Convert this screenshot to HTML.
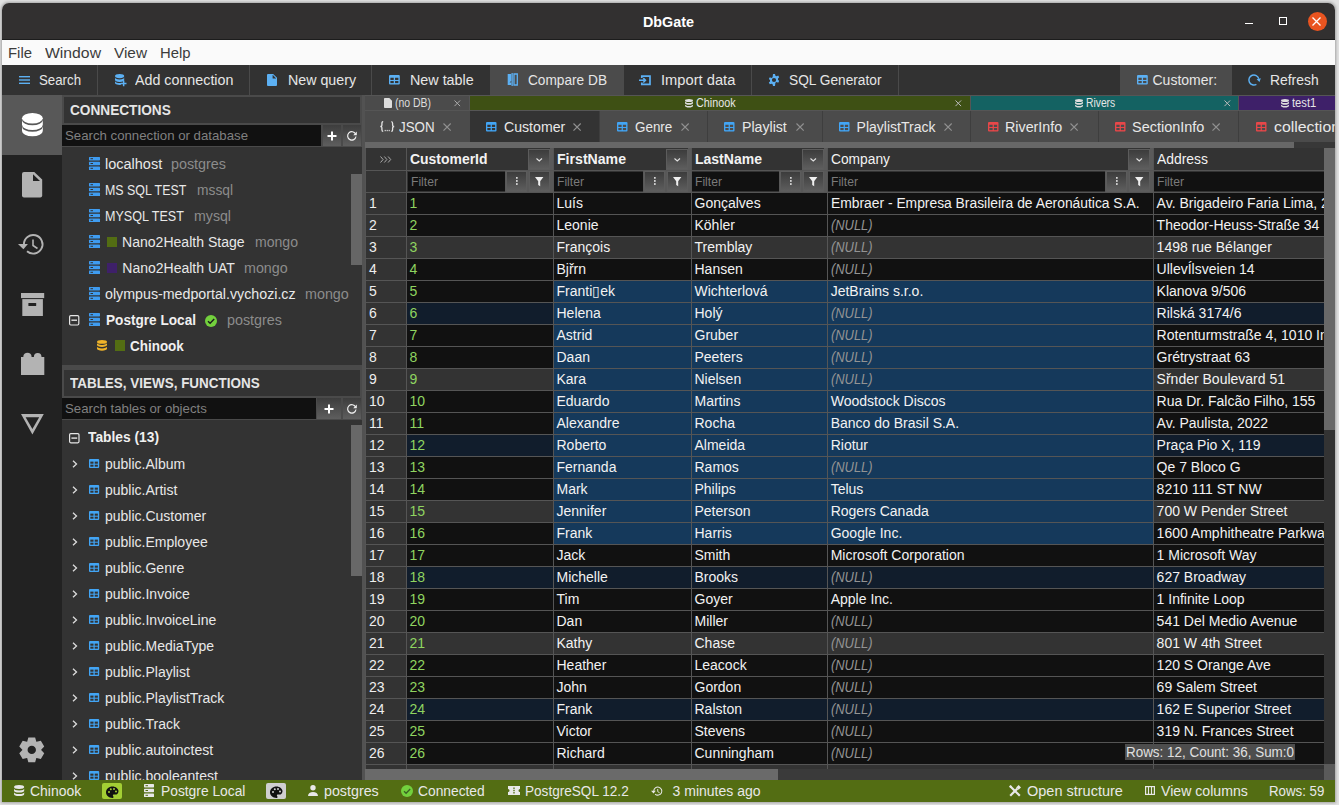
<!DOCTYPE html>
<html><head><meta charset="utf-8"><style>
html,body{margin:0;padding:0;width:1339px;height:805px;overflow:hidden;background:#e2e2e2;font-family:"Liberation Sans", sans-serif;}
div{position:absolute;box-sizing:border-box;}
.t{white-space:nowrap;line-height:normal;}
svg{overflow:visible}
</style></head><body>
<div style="left:2px;top:3px;width:1333px;height:799px;border-radius:7px 7px 0 0;box-shadow:0 0 3px 0.5px rgba(0,0,0,0.28);background:none"></div>
<div id="win" style="left:0;top:0;width:1339px;height:805px;clip-path:inset(3px 4px 3px 2px round 7px 7px 0 0);">
<div style="left:0px;top:0px;width:1339px;height:39px;background:#323030;"></div>
<div style="left:0px;top:39px;width:1339px;height:1px;background:#1c1c1c;"></div>
<div class="t" style="left:643px;top:14px;font-size:14px;color:#ffffff;font-weight:bold;transform:scaleX(1.0244);transform-origin:0 0;">DbGate</div>
<div style="left:1245px;top:22.6px;width:8px;height:1.3999999999999986px;background:#ffffff;"></div>
<div style="left:1279px;top:17px;width:8px;height:8px;background:transparent;border:1.5px solid #fff;"></div>
<div style="left:1307.5px;top:11.5px;width:19px;height:19px;border-radius:50%;background:#e95420"></div>
<svg style="position:absolute;left:1312px;top:16.5px;" width="9" height="9" viewBox="0 0 9 9"><path d="M0.5 0.5L8.5 8.5M8.5 0.5L0.5 8.5" stroke="#fff" stroke-width="1.3"/></svg>
<div style="left:0px;top:40px;width:1339px;height:25px;background:#fafafa;"></div>
<div class="t" style="left:8.2px;top:44.5px;font-size:14px;color:#3c3c3c;transform:scaleX(1.0639);transform-origin:0 0;">File</div>
<div class="t" style="left:44.5px;top:44.5px;font-size:14px;color:#3c3c3c;transform:scaleX(1.1247);transform-origin:0 0;">Window</div>
<div class="t" style="left:113.5px;top:44.5px;font-size:14px;color:#3c3c3c;transform:scaleX(1.0966);transform-origin:0 0;">View</div>
<div class="t" style="left:159.5px;top:44.5px;font-size:14px;color:#3c3c3c;transform:scaleX(1.0593);transform-origin:0 0;">Help</div>
<div style="left:0px;top:65px;width:1339px;height:30px;background:#323232;"></div>
<div style="left:490px;top:65px;width:134px;height:30px;background:#4b4b4b;"></div>
<div style="left:1120px;top:65px;width:112px;height:30px;background:#4b4b4b;"></div>
<div style="left:97px;top:65px;width:1px;height:30px;background:#4a4a4a;"></div>
<div style="left:249px;top:65px;width:1px;height:30px;background:#4a4a4a;"></div>
<div style="left:371px;top:65px;width:1px;height:30px;background:#4a4a4a;"></div>
<div style="left:751px;top:65px;width:1px;height:30px;background:#4a4a4a;"></div>
<div style="left:898px;top:65px;width:1px;height:30px;background:#4a4a4a;"></div>
<div class="t" style="left:39.4px;top:71.5px;font-size:14px;color:#e6e6e6;transform:scaleX(0.9468);transform-origin:0 0;">Search</div>
<div class="t" style="left:135.4px;top:71.5px;font-size:14px;color:#e6e6e6;transform:scaleX(1.0195);transform-origin:0 0;">Add connection</div>
<div class="t" style="left:288px;top:71.5px;font-size:14px;color:#e6e6e6;transform:scaleX(1.0162);transform-origin:0 0;">New query</div>
<div class="t" style="left:410.3px;top:71.5px;font-size:14px;color:#e6e6e6;transform:scaleX(1.0232);transform-origin:0 0;">New table</div>
<div class="t" style="left:528px;top:71.5px;font-size:14px;color:#e6e6e6;transform:scaleX(0.9763);transform-origin:0 0;">Compare DB</div>
<div class="t" style="left:661px;top:71.5px;font-size:14px;color:#e6e6e6;transform:scaleX(1.0492);transform-origin:0 0;">Import data</div>
<div class="t" style="left:789.4px;top:71.5px;font-size:14px;color:#e6e6e6;transform:scaleX(0.9796);transform-origin:0 0;">SQL Generator</div>
<div class="t" style="left:1152.5px;top:71.5px;font-size:14px;color:#e6e6e6;">Customer:</div>
<div class="t" style="left:1269.7px;top:71.5px;font-size:14px;color:#e6e6e6;transform:scaleX(0.9914);transform-origin:0 0;">Refresh</div>
<svg style="position:absolute;left:18.7px;top:75.6px;" width="11" height="8" viewBox="0 0 11 8"><rect x="0" y="0" width="11" height="1.4" fill="#5cb0f3"/><rect x="0" y="3.3" width="11" height="1.4" fill="#5cb0f3"/><rect x="0" y="6.6" width="11" height="1.4" fill="#5cb0f3"/></svg>
<svg style="position:absolute;left:114.8px;top:74.1px;" width="12" height="12" viewBox="0 0 12 12"><ellipse cx="4.6" cy="2.1" rx="4.6" ry="2.1" fill="#5cb0f3"/><path d="M0 3.3A4.6 2.1 0 0 0 9.2 3.3V5.8A4.6 2.1 0 0 1 0 5.8Z" fill="#5cb0f3"/><path d="M0 7A4.6 2.1 0 0 0 6 9V10.8A4.6 2.1 0 0 1 0 8.9Z" fill="#5cb0f3"/><path d="M7.9 6.6H9.4V8.7H11.5V10.2H9.4V12.3H7.9V10.2H5.8V8.7H7.9Z" fill="#5cb0f3"/></svg>
<svg style="position:absolute;left:267px;top:74.2px;" width="10" height="12" viewBox="0 0 10 12"><path d="M1 0h5.2L10 3.8V11a1 1 0 0 1-1 1H1a1 1 0 0 1-1-1V1a1 1 0 0 1 1-1z" fill="#5cb0f3"/><path d="M5.6 0.8V4.4H9.2Z" fill="#323232"/></svg>
<svg style="position:absolute;left:388.8px;top:75.3px;" width="10.8" height="9.5" viewBox="0 0 10.8 9.5"><svg viewBox="0 0 10 9" width="100%" height="100%" preserveAspectRatio="none"><rect x="0" y="0" width="10" height="9" rx="1" fill="#5cb0f3"/><rect x="1.3" y="2.6" width="3.1" height="2.1" fill="#323232"/><rect x="5.6" y="2.6" width="3.1" height="2.1" fill="#323232"/><rect x="1.3" y="5.7" width="3.1" height="2" fill="#323232"/><rect x="5.6" y="5.7" width="3.1" height="2" fill="#323232"/></svg></svg>
<svg style="position:absolute;left:507px;top:73px;" width="11" height="13" viewBox="0 0 11 13"><path d="M0.7 1H4.3V12H0.7Z" fill="#5cb0f3"/><path d="M4.5 0H5.8V13H4.5Z" fill="#5cb0f3"/><path d="M7 1H10.3V12H7Z" fill="none" stroke="#5cb0f3" stroke-width="1.3"/><path d="M2.5 9.5l1.8-1.8v1.8z" fill="#4b4b4b"/></svg>
<svg style="position:absolute;left:639px;top:74.6px;" width="12" height="10.6" viewBox="0 0 12 10.6"><path d="M2.8 3V1.2H11V9.4H2.8V7.6" fill="none" stroke="#5cb0f3" stroke-width="1.7"/><path d="M0 5.3H6.5M4.3 3.1L6.5 5.3L4.3 7.5" fill="none" stroke="#5cb0f3" stroke-width="1.5"/></svg>
<svg style="position:absolute;left:768px;top:73.8px;" width="12" height="12" viewBox="0 0 12 12"><path fill-rule="evenodd" fill="#5cb0f3" d="M5 0h2l.4 1.7 1.2.6 1.6-.7 1 1.7-1.2 1.2v1.3l1.2 1.2-1 1.7-1.6-.6-1.2.6L7 12H5l-.4-1.7-1.2-.6-1.6.6-1-1.7 1.2-1.2V6.1L.8 4.9l1-1.7 1.6.7 1.2-.6z M6 3.9A2.1 2.1 0 1 0 6 8.1A2.1 2.1 0 1 0 6 3.9z"/></svg>
<svg style="position:absolute;left:1136.6px;top:75.3px;" width="10.8" height="9.5" viewBox="0 0 10.8 9.5"><svg viewBox="0 0 10 9" width="100%" height="100%" preserveAspectRatio="none"><rect x="0" y="0" width="10" height="9" rx="1" fill="#5cb0f3"/><rect x="1.3" y="2.6" width="3.1" height="2.1" fill="#4b4b4b"/><rect x="5.6" y="2.6" width="3.1" height="2.1" fill="#4b4b4b"/><rect x="1.3" y="5.7" width="3.1" height="2" fill="#4b4b4b"/><rect x="5.6" y="5.7" width="3.1" height="2" fill="#4b4b4b"/></svg></svg>
<svg style="position:absolute;left:1248px;top:73.6px;" width="13" height="12" viewBox="0 0 13 12"><path d="M8.4 10.33A5 5 0 1 1 10.73 4.71" fill="none" stroke="#5cb0f3" stroke-width="1.45"/><path d="M12.85 4.14L8.61 5.28L11.5 7.9Z" fill="#5cb0f3"/></svg>
<div style="left:2px;top:95px;width:60px;height:685px;background:#222222;"></div>
<div style="left:2px;top:95px;width:60px;height:60px;background:#585858;"></div>
<svg style="position:absolute;left:21.8px;top:112.7px;" width="20.8" height="23.3" viewBox="0 0 20.8 23.3"><ellipse cx="10.4" cy="5.3" rx="10.4" ry="5.3" fill="#fff"/><path d="M0 6.9A10.4 5.3 0 0 0 20.8 6.9V11.8A10.4 5.3 0 0 1 0 11.8Z" fill="#fff"/><path d="M0 13.4A10.4 5.3 0 0 0 20.8 13.4V18A10.4 5.3 0 0 1 0 18Z" fill="#fff"/></svg>
<svg style="position:absolute;left:22px;top:171.6px;" width="20.2" height="25.4" viewBox="0 0 20.2 25.4"><path d="M2 0H12.3L20.2 7.6V23.4A2 2 0 0 1 18.2 25.4H2A2 2 0 0 1 0 23.4V2A2 2 0 0 1 2 0Z" fill="#b3b3b3"/><path d="M11 2.2V8.9H18Z" fill="#222"/></svg>
<svg style="position:absolute;left:14px;top:226px;" width="36" height="36" viewBox="0 0 36 36"><path d="M9.9 18.3A9.3 9.3 0 1 1 13 25.25" fill="none" stroke="#b3b3b3" stroke-width="1.9"/><path d="M4 18.1H13.9L9.4 23.3Z" fill="#b3b3b3"/><path d="M19 13.5V19.5L23.5 22.5" fill="none" stroke="#b3b3b3" stroke-width="1.6"/></svg>
<svg style="position:absolute;left:20.7px;top:292.9px;" width="23.2" height="23" viewBox="0 0 23.2 23"><rect x="0" y="0" width="23.2" height="5.1" fill="#b3b3b3"/><rect x="1.3" y="6.1" width="20.6" height="16.9" fill="#b3b3b3"/><rect x="7.4" y="10.1" width="7.8" height="2.9" rx="0.5" fill="#222"/></svg>
<svg style="position:absolute;left:20.6px;top:352.9px;" width="23.3" height="22.1" viewBox="0 0 23.3 22.1"><path d="M0 4.1H2.3V3.8A3.8 3.8 0 0 1 10.6 3.8V4.1H12.9V3.8A3.8 3.8 0 0 1 20.5 3.8V4.1H23.3V22.1H0Z" fill="#b3b3b3"/></svg>
<svg style="position:absolute;left:20.7px;top:414px;" width="22.8" height="20.4" viewBox="0 0 22.8 20.4"><path fill-rule="evenodd" d="M0 0H22.8L11.4 20.4Z M4.6 3.2H18.2L11.4 14.9Z" fill="#b3b3b3"/></svg>
<svg style="position:absolute;left:19.25px;top:736.5px;" width="25.5" height="25.8" viewBox="0 0 25.5 25.8"><path fill="#b3b3b3" d="M8.15 4.70 L9.35 0.46 L16.15 0.46 L17.35 4.70 L17.55 4.82 L21.83 3.73 L25.23 9.62 L22.15 12.78 L22.15 13.02 L25.23 16.18 L21.83 22.07 L17.55 20.98 L17.35 21.10 L16.15 25.34 L9.35 25.34 L8.15 21.10 L7.95 20.98 L3.67 22.07 L0.27 16.18 L3.35 13.02 L3.35 12.78 L0.27 9.62 L3.67 3.73 L7.95 4.82Z"/><circle cx="12.75" cy="12.9" r="4.2" fill="#222"/></svg>
<div style="left:62px;top:95px;width:303px;height:685px;background:#4a4a4a;"></div>
<div style="left:362px;top:95px;width:3px;height:685px;background:#525252;"></div>
<div style="left:64px;top:97px;width:296px;height:26px;background:#333333;"></div>
<div class="t" style="left:69.7px;top:102px;font-size:14px;color:#e6e6e6;font-weight:bold;transform:scaleX(0.9744);transform-origin:0 0;">CONNECTIONS</div>
<div style="left:62px;top:125px;width:259px;height:21px;background:#111111;"></div>
<div class="t" style="left:64.8px;top:127.69999999999999px;font-size:13px;color:#808080;transform:scaleX(1.0169);transform-origin:0 0;">Search connection or database</div>
<div style="left:323px;top:125px;width:18px;height:21px;background:#555;background:linear-gradient(#3d3d3d,#5e5e5e);"></div>
<div style="left:343px;top:125px;width:18px;height:21px;background:#555;background:linear-gradient(#3d3d3d,#5e5e5e);"></div>
<svg style="position:absolute;left:327px;top:130.5px;" width="10" height="10" viewBox="0 0 10 10"><path d="M5 0.5v9M0.5 5h9" stroke="#fff" stroke-width="2"/></svg>
<svg style="position:absolute;left:347px;top:130.5px;" width="10" height="10" viewBox="0 0 10 10"><path d="M8.6 3A4.2 4.2 0 1 0 9 5.5" fill="none" stroke="#eee" stroke-width="1.2"/><path d="M9.8 0.6v3.6H6.2z" fill="#eee"/></svg>
<div style="left:62px;top:147px;width:300px;height:218px;background:#333333;"></div>
<div style="left:351px;top:174px;width:11px;height:91px;background:#666666;"></div>
<svg style="position:absolute;left:89px;top:157px;" width="11" height="13" viewBox="0 0 11 13"><rect x="0" y="0" width="11" height="3.4" rx="0.6" fill="#3f9cf0"/><rect x="0" y="4.8" width="11" height="3.4" rx="0.6" fill="#3f9cf0"/><rect x="0" y="9.6" width="11" height="3.4" rx="0.6" fill="#3f9cf0"/><rect x="1.5" y="1.2" width="2.5" height="1" fill="#333"/><rect x="1.5" y="6" width="2.5" height="1" fill="#333"/><rect x="1.5" y="10.8" width="2.5" height="1" fill="#333"/></svg>
<div class="t" style="left:104.8px;top:156px;font-size:14px;color:#e8e8e8;transform:scaleX(1.0352);transform-origin:0 0;">localhost</div>
<div class="t" style="left:170.8px;top:156px;font-size:14px;color:#8c8c8c;transform:scaleX(1.0243);transform-origin:0 0;">postgres</div>
<svg style="position:absolute;left:89px;top:183px;" width="11" height="13" viewBox="0 0 11 13"><rect x="0" y="0" width="11" height="3.4" rx="0.6" fill="#3f9cf0"/><rect x="0" y="4.8" width="11" height="3.4" rx="0.6" fill="#3f9cf0"/><rect x="0" y="9.6" width="11" height="3.4" rx="0.6" fill="#3f9cf0"/><rect x="1.5" y="1.2" width="2.5" height="1" fill="#333"/><rect x="1.5" y="6" width="2.5" height="1" fill="#333"/><rect x="1.5" y="10.8" width="2.5" height="1" fill="#333"/></svg>
<div class="t" style="left:104.8px;top:182px;font-size:14px;color:#e8e8e8;transform:scaleX(0.8858);transform-origin:0 0;">MS SQL TEST</div>
<div class="t" style="left:196.5px;top:182px;font-size:14px;color:#8c8c8c;transform:scaleX(0.9847);transform-origin:0 0;">mssql</div>
<svg style="position:absolute;left:89px;top:209px;" width="11" height="13" viewBox="0 0 11 13"><rect x="0" y="0" width="11" height="3.4" rx="0.6" fill="#3f9cf0"/><rect x="0" y="4.8" width="11" height="3.4" rx="0.6" fill="#3f9cf0"/><rect x="0" y="9.6" width="11" height="3.4" rx="0.6" fill="#3f9cf0"/><rect x="1.5" y="1.2" width="2.5" height="1" fill="#333"/><rect x="1.5" y="6" width="2.5" height="1" fill="#333"/><rect x="1.5" y="10.8" width="2.5" height="1" fill="#333"/></svg>
<div class="t" style="left:104.8px;top:208px;font-size:14px;color:#e8e8e8;transform:scaleX(0.8965);transform-origin:0 0;">MYSQL TEST</div>
<div class="t" style="left:194px;top:208px;font-size:14px;color:#8c8c8c;transform:scaleX(1.0121);transform-origin:0 0;">mysql</div>
<svg style="position:absolute;left:89px;top:235px;" width="11" height="13" viewBox="0 0 11 13"><rect x="0" y="0" width="11" height="3.4" rx="0.6" fill="#3f9cf0"/><rect x="0" y="4.8" width="11" height="3.4" rx="0.6" fill="#3f9cf0"/><rect x="0" y="9.6" width="11" height="3.4" rx="0.6" fill="#3f9cf0"/><rect x="1.5" y="1.2" width="2.5" height="1" fill="#333"/><rect x="1.5" y="6" width="2.5" height="1" fill="#333"/><rect x="1.5" y="10.8" width="2.5" height="1" fill="#333"/></svg>
<div style="left:106.5px;top:236.5px;width:10.5px;height:10.300000000000011px;background:#536d13;"></div>
<div class="t" style="left:122.3px;top:234px;font-size:14px;color:#e8e8e8;transform:scaleX(1.0033);transform-origin:0 0;">Nano2Health Stage</div>
<div class="t" style="left:254.5px;top:234px;font-size:14px;color:#8c8c8c;transform:scaleX(1.0045);transform-origin:0 0;">mongo</div>
<svg style="position:absolute;left:89px;top:261px;" width="11" height="13" viewBox="0 0 11 13"><rect x="0" y="0" width="11" height="3.4" rx="0.6" fill="#3f9cf0"/><rect x="0" y="4.8" width="11" height="3.4" rx="0.6" fill="#3f9cf0"/><rect x="0" y="9.6" width="11" height="3.4" rx="0.6" fill="#3f9cf0"/><rect x="1.5" y="1.2" width="2.5" height="1" fill="#333"/><rect x="1.5" y="6" width="2.5" height="1" fill="#333"/><rect x="1.5" y="10.8" width="2.5" height="1" fill="#333"/></svg>
<div style="left:106.5px;top:262.5px;width:10.5px;height:10.300000000000011px;background:#3e2069;"></div>
<div class="t" style="left:122.3px;top:260px;font-size:14px;color:#e8e8e8;">Nano2Health UAT</div>
<div class="t" style="left:243.8px;top:260px;font-size:14px;color:#8c8c8c;transform:scaleX(1.0209);transform-origin:0 0;">mongo</div>
<svg style="position:absolute;left:89px;top:287px;" width="11" height="13" viewBox="0 0 11 13"><rect x="0" y="0" width="11" height="3.4" rx="0.6" fill="#3f9cf0"/><rect x="0" y="4.8" width="11" height="3.4" rx="0.6" fill="#3f9cf0"/><rect x="0" y="9.6" width="11" height="3.4" rx="0.6" fill="#3f9cf0"/><rect x="1.5" y="1.2" width="2.5" height="1" fill="#333"/><rect x="1.5" y="6" width="2.5" height="1" fill="#333"/><rect x="1.5" y="10.8" width="2.5" height="1" fill="#333"/></svg>
<div class="t" style="left:104.8px;top:286px;font-size:14px;color:#e8e8e8;transform:scaleX(1.0165);transform-origin:0 0;">olympus-medportal.vychozi.cz</div>
<div class="t" style="left:304.8px;top:286px;font-size:14px;color:#8c8c8c;transform:scaleX(1.0232);transform-origin:0 0;">mongo</div>
<svg style="position:absolute;left:68.8px;top:314.6px;" width="10.4" height="10.6" viewBox="0 0 10.4 10.6"><rect x="0.6" y="0.6" width="9.2" height="9.4" rx="1.2" fill="none" stroke="#e6e6e6" stroke-width="1.2"/><path d="M2.4 5.2h5.6" stroke="#f0f0f0" stroke-width="1.3"/></svg>
<svg style="position:absolute;left:89px;top:313px;" width="11" height="13" viewBox="0 0 11 13"><rect x="0" y="0" width="11" height="3.4" rx="0.6" fill="#3f9cf0"/><rect x="0" y="4.8" width="11" height="3.4" rx="0.6" fill="#3f9cf0"/><rect x="0" y="9.6" width="11" height="3.4" rx="0.6" fill="#3f9cf0"/><rect x="1.5" y="1.2" width="2.5" height="1" fill="#333"/><rect x="1.5" y="6" width="2.5" height="1" fill="#333"/><rect x="1.5" y="10.8" width="2.5" height="1" fill="#333"/></svg>
<div class="t" style="left:105.5px;top:312px;font-size:14px;color:#f0f0f0;font-weight:bold;transform:scaleX(0.9721);transform-origin:0 0;">Postgre Local</div>
<svg style="position:absolute;left:205.3px;top:314.8px;" width="12" height="12" viewBox="0 0 12 12"><circle cx="6" cy="6" r="6" fill="#73d13d"/><path d="M3 6.2l2.1 2.1L9.2 4" fill="none" stroke="#1c1c1c" stroke-width="1.4"/></svg>
<div class="t" style="left:227px;top:312px;font-size:14px;color:#8c8c8c;transform:scaleX(1.0243);transform-origin:0 0;">postgres</div>
<svg style="position:absolute;left:97px;top:340px;" width="10" height="11" viewBox="0 0 10 11"><ellipse cx="5" cy="1.9" rx="5" ry="1.9" fill="#f0b429"/><path d="M0 3.1v2c0 1 2.2 1.9 5 1.9s5-.9 5-1.9v-2c0 1-2.2 1.9-5 1.9S0 4.1 0 3.1z" fill="#f0b429"/><path d="M0 6.6v2.2c0 1 2.2 1.9 5 1.9s5-.9 5-1.9V6.6c0 1-2.2 1.9-5 1.9S0 7.6 0 6.6z" fill="#f0b429"/></svg>
<div style="left:114.5px;top:340px;width:10.5px;height:10.5px;background:#536d13;"></div>
<div class="t" style="left:130.2px;top:338px;font-size:14px;color:#f0f0f0;font-weight:bold;transform:scaleX(0.9608);transform-origin:0 0;">Chinook</div>
<div style="left:64px;top:370px;width:296px;height:26px;background:#333333;"></div>
<div class="t" style="left:69.6px;top:375px;font-size:14px;color:#e6e6e6;font-weight:bold;transform:scaleX(0.9610);transform-origin:0 0;">TABLES, VIEWS, FUNCTIONS</div>
<div style="left:62px;top:398px;width:254px;height:21px;background:#111111;"></div>
<div class="t" style="left:64.8px;top:400.5px;font-size:13px;color:#808080;transform:scaleX(1.0167);transform-origin:0 0;">Search tables or objects</div>
<div style="left:317px;top:398px;width:24px;height:21px;background:#555;background:linear-gradient(#3d3d3d,#5e5e5e);"></div>
<div style="left:343px;top:398px;width:18px;height:21px;background:#555;background:linear-gradient(#3d3d3d,#5e5e5e);"></div>
<svg style="position:absolute;left:324px;top:403.5px;" width="10" height="10" viewBox="0 0 10 10"><path d="M5 0.5v9M0.5 5h9" stroke="#fff" stroke-width="2"/></svg>
<svg style="position:absolute;left:347px;top:403.5px;" width="10" height="10" viewBox="0 0 10 10"><path d="M8.6 3A4.2 4.2 0 1 0 9 5.5" fill="none" stroke="#eee" stroke-width="1.2"/><path d="M9.8 0.6v3.6H6.2z" fill="#eee"/></svg>
<div style="left:62px;top:420px;width:300px;height:360px;background:#333333;"></div>
<div style="left:351px;top:425px;width:11px;height:151px;background:#686868;"></div>
<svg style="position:absolute;left:68.6px;top:432.6px;" width="10.6" height="10.4" viewBox="0 0 10.6 10.4"><rect x="0.6" y="0.6" width="9.4" height="9.2" rx="1.2" fill="none" stroke="#e6e6e6" stroke-width="1.2"/><path d="M2.4 5.1h5.8" stroke="#f0f0f0" stroke-width="1.3"/></svg>
<div class="t" style="left:88px;top:429px;font-size:14px;color:#f0f0f0;font-weight:bold;transform:scaleX(0.9848);transform-origin:0 0;">Tables (13)</div>
<svg style="position:absolute;left:71.5px;top:460.0px;" width="6" height="8" viewBox="0 0 6 8"><path d="M1 0.8l3.5 3.2L1 7.2" fill="none" stroke="#ddd" stroke-width="1.3"/></svg>
<svg style="position:absolute;left:88.8px;top:459.0px;" width="10.2" height="9" viewBox="0 0 10.2 9"><svg viewBox="0 0 10 9" width="100%" height="100%" preserveAspectRatio="none"><rect x="0" y="0" width="10" height="9" rx="1" fill="#42a5f5"/><rect x="1.3" y="2.6" width="3.1" height="2.1" fill="#333"/><rect x="5.6" y="2.6" width="3.1" height="2.1" fill="#333"/><rect x="1.3" y="5.7" width="3.1" height="2" fill="#333"/><rect x="5.6" y="5.7" width="3.1" height="2" fill="#333"/></svg></svg>
<div class="t" style="left:105px;top:455.5px;font-size:14px;color:#e8e8e8;">public.Album</div>
<svg style="position:absolute;left:71.5px;top:486.0px;" width="6" height="8" viewBox="0 0 6 8"><path d="M1 0.8l3.5 3.2L1 7.2" fill="none" stroke="#ddd" stroke-width="1.3"/></svg>
<svg style="position:absolute;left:88.8px;top:485.0px;" width="10.2" height="9" viewBox="0 0 10.2 9"><svg viewBox="0 0 10 9" width="100%" height="100%" preserveAspectRatio="none"><rect x="0" y="0" width="10" height="9" rx="1" fill="#42a5f5"/><rect x="1.3" y="2.6" width="3.1" height="2.1" fill="#333"/><rect x="5.6" y="2.6" width="3.1" height="2.1" fill="#333"/><rect x="1.3" y="5.7" width="3.1" height="2" fill="#333"/><rect x="5.6" y="5.7" width="3.1" height="2" fill="#333"/></svg></svg>
<div class="t" style="left:105px;top:481.5px;font-size:14px;color:#e8e8e8;">public.Artist</div>
<svg style="position:absolute;left:71.5px;top:512.0px;" width="6" height="8" viewBox="0 0 6 8"><path d="M1 0.8l3.5 3.2L1 7.2" fill="none" stroke="#ddd" stroke-width="1.3"/></svg>
<svg style="position:absolute;left:88.8px;top:511.0px;" width="10.2" height="9" viewBox="0 0 10.2 9"><svg viewBox="0 0 10 9" width="100%" height="100%" preserveAspectRatio="none"><rect x="0" y="0" width="10" height="9" rx="1" fill="#42a5f5"/><rect x="1.3" y="2.6" width="3.1" height="2.1" fill="#333"/><rect x="5.6" y="2.6" width="3.1" height="2.1" fill="#333"/><rect x="1.3" y="5.7" width="3.1" height="2" fill="#333"/><rect x="5.6" y="5.7" width="3.1" height="2" fill="#333"/></svg></svg>
<div class="t" style="left:105px;top:507.5px;font-size:14px;color:#e8e8e8;">public.Customer</div>
<svg style="position:absolute;left:71.5px;top:538.0px;" width="6" height="8" viewBox="0 0 6 8"><path d="M1 0.8l3.5 3.2L1 7.2" fill="none" stroke="#ddd" stroke-width="1.3"/></svg>
<svg style="position:absolute;left:88.8px;top:537.0px;" width="10.2" height="9" viewBox="0 0 10.2 9"><svg viewBox="0 0 10 9" width="100%" height="100%" preserveAspectRatio="none"><rect x="0" y="0" width="10" height="9" rx="1" fill="#42a5f5"/><rect x="1.3" y="2.6" width="3.1" height="2.1" fill="#333"/><rect x="5.6" y="2.6" width="3.1" height="2.1" fill="#333"/><rect x="1.3" y="5.7" width="3.1" height="2" fill="#333"/><rect x="5.6" y="5.7" width="3.1" height="2" fill="#333"/></svg></svg>
<div class="t" style="left:105px;top:533.5px;font-size:14px;color:#e8e8e8;">public.Employee</div>
<svg style="position:absolute;left:71.5px;top:564.0px;" width="6" height="8" viewBox="0 0 6 8"><path d="M1 0.8l3.5 3.2L1 7.2" fill="none" stroke="#ddd" stroke-width="1.3"/></svg>
<svg style="position:absolute;left:88.8px;top:563.0px;" width="10.2" height="9" viewBox="0 0 10.2 9"><svg viewBox="0 0 10 9" width="100%" height="100%" preserveAspectRatio="none"><rect x="0" y="0" width="10" height="9" rx="1" fill="#42a5f5"/><rect x="1.3" y="2.6" width="3.1" height="2.1" fill="#333"/><rect x="5.6" y="2.6" width="3.1" height="2.1" fill="#333"/><rect x="1.3" y="5.7" width="3.1" height="2" fill="#333"/><rect x="5.6" y="5.7" width="3.1" height="2" fill="#333"/></svg></svg>
<div class="t" style="left:105px;top:559.5px;font-size:14px;color:#e8e8e8;">public.Genre</div>
<svg style="position:absolute;left:71.5px;top:590.0px;" width="6" height="8" viewBox="0 0 6 8"><path d="M1 0.8l3.5 3.2L1 7.2" fill="none" stroke="#ddd" stroke-width="1.3"/></svg>
<svg style="position:absolute;left:88.8px;top:589.0px;" width="10.2" height="9" viewBox="0 0 10.2 9"><svg viewBox="0 0 10 9" width="100%" height="100%" preserveAspectRatio="none"><rect x="0" y="0" width="10" height="9" rx="1" fill="#42a5f5"/><rect x="1.3" y="2.6" width="3.1" height="2.1" fill="#333"/><rect x="5.6" y="2.6" width="3.1" height="2.1" fill="#333"/><rect x="1.3" y="5.7" width="3.1" height="2" fill="#333"/><rect x="5.6" y="5.7" width="3.1" height="2" fill="#333"/></svg></svg>
<div class="t" style="left:105px;top:585.5px;font-size:14px;color:#e8e8e8;">public.Invoice</div>
<svg style="position:absolute;left:71.5px;top:616.0px;" width="6" height="8" viewBox="0 0 6 8"><path d="M1 0.8l3.5 3.2L1 7.2" fill="none" stroke="#ddd" stroke-width="1.3"/></svg>
<svg style="position:absolute;left:88.8px;top:615.0px;" width="10.2" height="9" viewBox="0 0 10.2 9"><svg viewBox="0 0 10 9" width="100%" height="100%" preserveAspectRatio="none"><rect x="0" y="0" width="10" height="9" rx="1" fill="#42a5f5"/><rect x="1.3" y="2.6" width="3.1" height="2.1" fill="#333"/><rect x="5.6" y="2.6" width="3.1" height="2.1" fill="#333"/><rect x="1.3" y="5.7" width="3.1" height="2" fill="#333"/><rect x="5.6" y="5.7" width="3.1" height="2" fill="#333"/></svg></svg>
<div class="t" style="left:105px;top:611.5px;font-size:14px;color:#e8e8e8;">public.InvoiceLine</div>
<svg style="position:absolute;left:71.5px;top:642.0px;" width="6" height="8" viewBox="0 0 6 8"><path d="M1 0.8l3.5 3.2L1 7.2" fill="none" stroke="#ddd" stroke-width="1.3"/></svg>
<svg style="position:absolute;left:88.8px;top:641.0px;" width="10.2" height="9" viewBox="0 0 10.2 9"><svg viewBox="0 0 10 9" width="100%" height="100%" preserveAspectRatio="none"><rect x="0" y="0" width="10" height="9" rx="1" fill="#42a5f5"/><rect x="1.3" y="2.6" width="3.1" height="2.1" fill="#333"/><rect x="5.6" y="2.6" width="3.1" height="2.1" fill="#333"/><rect x="1.3" y="5.7" width="3.1" height="2" fill="#333"/><rect x="5.6" y="5.7" width="3.1" height="2" fill="#333"/></svg></svg>
<div class="t" style="left:105px;top:637.5px;font-size:14px;color:#e8e8e8;">public.MediaType</div>
<svg style="position:absolute;left:71.5px;top:668.0px;" width="6" height="8" viewBox="0 0 6 8"><path d="M1 0.8l3.5 3.2L1 7.2" fill="none" stroke="#ddd" stroke-width="1.3"/></svg>
<svg style="position:absolute;left:88.8px;top:667.0px;" width="10.2" height="9" viewBox="0 0 10.2 9"><svg viewBox="0 0 10 9" width="100%" height="100%" preserveAspectRatio="none"><rect x="0" y="0" width="10" height="9" rx="1" fill="#42a5f5"/><rect x="1.3" y="2.6" width="3.1" height="2.1" fill="#333"/><rect x="5.6" y="2.6" width="3.1" height="2.1" fill="#333"/><rect x="1.3" y="5.7" width="3.1" height="2" fill="#333"/><rect x="5.6" y="5.7" width="3.1" height="2" fill="#333"/></svg></svg>
<div class="t" style="left:105px;top:663.5px;font-size:14px;color:#e8e8e8;">public.Playlist</div>
<svg style="position:absolute;left:71.5px;top:694.0px;" width="6" height="8" viewBox="0 0 6 8"><path d="M1 0.8l3.5 3.2L1 7.2" fill="none" stroke="#ddd" stroke-width="1.3"/></svg>
<svg style="position:absolute;left:88.8px;top:693.0px;" width="10.2" height="9" viewBox="0 0 10.2 9"><svg viewBox="0 0 10 9" width="100%" height="100%" preserveAspectRatio="none"><rect x="0" y="0" width="10" height="9" rx="1" fill="#42a5f5"/><rect x="1.3" y="2.6" width="3.1" height="2.1" fill="#333"/><rect x="5.6" y="2.6" width="3.1" height="2.1" fill="#333"/><rect x="1.3" y="5.7" width="3.1" height="2" fill="#333"/><rect x="5.6" y="5.7" width="3.1" height="2" fill="#333"/></svg></svg>
<div class="t" style="left:105px;top:689.5px;font-size:14px;color:#e8e8e8;">public.PlaylistTrack</div>
<svg style="position:absolute;left:71.5px;top:720.0px;" width="6" height="8" viewBox="0 0 6 8"><path d="M1 0.8l3.5 3.2L1 7.2" fill="none" stroke="#ddd" stroke-width="1.3"/></svg>
<svg style="position:absolute;left:88.8px;top:719.0px;" width="10.2" height="9" viewBox="0 0 10.2 9"><svg viewBox="0 0 10 9" width="100%" height="100%" preserveAspectRatio="none"><rect x="0" y="0" width="10" height="9" rx="1" fill="#42a5f5"/><rect x="1.3" y="2.6" width="3.1" height="2.1" fill="#333"/><rect x="5.6" y="2.6" width="3.1" height="2.1" fill="#333"/><rect x="1.3" y="5.7" width="3.1" height="2" fill="#333"/><rect x="5.6" y="5.7" width="3.1" height="2" fill="#333"/></svg></svg>
<div class="t" style="left:105px;top:715.5px;font-size:14px;color:#e8e8e8;">public.Track</div>
<svg style="position:absolute;left:71.5px;top:746.0px;" width="6" height="8" viewBox="0 0 6 8"><path d="M1 0.8l3.5 3.2L1 7.2" fill="none" stroke="#ddd" stroke-width="1.3"/></svg>
<svg style="position:absolute;left:88.8px;top:745.0px;" width="10.2" height="9" viewBox="0 0 10.2 9"><svg viewBox="0 0 10 9" width="100%" height="100%" preserveAspectRatio="none"><rect x="0" y="0" width="10" height="9" rx="1" fill="#42a5f5"/><rect x="1.3" y="2.6" width="3.1" height="2.1" fill="#333"/><rect x="5.6" y="2.6" width="3.1" height="2.1" fill="#333"/><rect x="1.3" y="5.7" width="3.1" height="2" fill="#333"/><rect x="5.6" y="5.7" width="3.1" height="2" fill="#333"/></svg></svg>
<div class="t" style="left:105px;top:741.5px;font-size:14px;color:#e8e8e8;">public.autoinctest</div>
<svg style="position:absolute;left:71.5px;top:772.0px;" width="6" height="8" viewBox="0 0 6 8"><path d="M1 0.8l3.5 3.2L1 7.2" fill="none" stroke="#ddd" stroke-width="1.3"/></svg>
<svg style="position:absolute;left:88.8px;top:771.0px;" width="10.2" height="9" viewBox="0 0 10.2 9"><svg viewBox="0 0 10 9" width="100%" height="100%" preserveAspectRatio="none"><rect x="0" y="0" width="10" height="9" rx="1" fill="#42a5f5"/><rect x="1.3" y="2.6" width="3.1" height="2.1" fill="#333"/><rect x="5.6" y="2.6" width="3.1" height="2.1" fill="#333"/><rect x="1.3" y="5.7" width="3.1" height="2" fill="#333"/><rect x="5.6" y="5.7" width="3.1" height="2" fill="#333"/></svg></svg>
<div class="t" style="left:105px;top:767.5px;font-size:14px;color:#e8e8e8;">public.booleantest</div>
<div style="left:365px;top:95px;width:970px;height:47px;background:#4b4b4b;"></div>
<div style="left:365px;top:95px;width:970px;height:1px;background:#555555;"></div>
<div style="left:470px;top:96px;width:500px;height:14px;background:#3e5014;"></div>
<div style="left:971px;top:96px;width:267px;height:14px;background:#146262;"></div>
<div style="left:1239px;top:96px;width:96px;height:14px;background:#3e2069;"></div>
<div style="left:469px;top:96px;width:1px;height:14px;background:#555555;"></div>
<div style="left:970px;top:96px;width:1px;height:14px;background:#555555;"></div>
<div style="left:1238px;top:96px;width:1px;height:14px;background:#555555;"></div>
<div style="left:365px;top:110px;width:970px;height:1px;background:#555555;"></div>
<svg style="position:absolute;left:384px;top:98px;" width="8" height="10" viewBox="0 0 8 10"><path d="M0.8 0h4.5l2.7 2.8v6.4a.8.8 0 0 1-.8.8H.8a.8.8 0 0 1-.8-.8V.8A.8.8 0 0 1 .8 0z" fill="#ddd"/></svg>
<div class="t" style="left:395px;top:96px;font-size:12px;color:#dddddd;transform:scaleX(0.8707);transform-origin:0 0;">(no DB)</div>
<svg style="position:absolute;left:454px;top:99.8px;" width="6.6" height="6.6" viewBox="0 0 6.6 6.6"><path d="M0.5 0.5L6.1 6.1M6.1 0.5L0.5 6.1" stroke="#aaa" stroke-width="1"/></svg>
<svg style="position:absolute;left:684.5px;top:98.5px;" width="8" height="9" viewBox="0 0 8 9"><ellipse cx="4" cy="1.5" rx="4" ry="1.5" fill="#ddd"/><path d="M0 2.5v1.7c0 .8 1.8 1.5 4 1.5s4-.7 4-1.5V2.5c0 .8-1.8 1.5-4 1.5S0 3.3 0 2.5z" fill="#ddd"/><path d="M0 5.4v1.7c0 .8 1.8 1.5 4 1.5s4-.7 4-1.5V5.4c0 .8-1.8 1.5-4 1.5S0 6.2 0 5.4z" fill="#ddd"/></svg>
<div class="t" style="left:696px;top:96px;font-size:12px;color:#e6e6e6;transform:scaleX(0.8994);transform-origin:0 0;">Chinook</div>
<svg style="position:absolute;left:955.3px;top:99.8px;" width="6.6" height="6.6" viewBox="0 0 6.6 6.6"><path d="M0.5 0.5L6.1 6.1M6.1 0.5L0.5 6.1" stroke="#bbb" stroke-width="1"/></svg>
<svg style="position:absolute;left:1074.5px;top:98.5px;" width="8" height="9" viewBox="0 0 8 9"><ellipse cx="4" cy="1.5" rx="4" ry="1.5" fill="#ddd"/><path d="M0 2.5v1.7c0 .8 1.8 1.5 4 1.5s4-.7 4-1.5V2.5c0 .8-1.8 1.5-4 1.5S0 3.3 0 2.5z" fill="#ddd"/><path d="M0 5.4v1.7c0 .8 1.8 1.5 4 1.5s4-.7 4-1.5V5.4c0 .8-1.8 1.5-4 1.5S0 6.2 0 5.4z" fill="#ddd"/></svg>
<div class="t" style="left:1086px;top:96px;font-size:12px;color:#e6e6e6;transform:scaleX(0.8588);transform-origin:0 0;">Rivers</div>
<svg style="position:absolute;left:1223.8px;top:99.8px;" width="6.6" height="6.6" viewBox="0 0 6.6 6.6"><path d="M0.5 0.5L6.1 6.1M6.1 0.5L0.5 6.1" stroke="#bbb" stroke-width="1"/></svg>
<svg style="position:absolute;left:1280.5px;top:98.5px;" width="8" height="9" viewBox="0 0 8 9"><ellipse cx="4" cy="1.5" rx="4" ry="1.5" fill="#ddd"/><path d="M0 2.5v1.7c0 .8 1.8 1.5 4 1.5s4-.7 4-1.5V2.5c0 .8-1.8 1.5-4 1.5S0 3.3 0 2.5z" fill="#ddd"/><path d="M0 5.4v1.7c0 .8 1.8 1.5 4 1.5s4-.7 4-1.5V5.4c0 .8-1.8 1.5-4 1.5S0 6.2 0 5.4z" fill="#ddd"/></svg>
<div class="t" style="left:1291.7px;top:96px;font-size:12px;color:#e6e6e6;transform:scaleX(0.9341);transform-origin:0 0;">test1</div>
<div style="left:470px;top:111px;width:129px;height:31px;background:#333333;"></div>
<div style="left:599px;top:111px;width:1px;height:31px;background:#3e3e3e;"></div>
<div style="left:707px;top:111px;width:1px;height:31px;background:#3e3e3e;"></div>
<div style="left:821.5px;top:111px;width:1.0px;height:31px;background:#3e3e3e;"></div>
<div style="left:970px;top:111px;width:1px;height:31px;background:#3e3e3e;"></div>
<div style="left:1097.5px;top:111px;width:1.0px;height:31px;background:#3e3e3e;"></div>
<div style="left:1238px;top:111px;width:1px;height:31px;background:#3e3e3e;"></div>
<svg style="position:absolute;left:379.5px;top:121.3px;" width="14.5" height="11" viewBox="0 0 14.5 11"><path d="M3.2 0.6C1.9 0.6 1.9 1.5 1.9 2.5V4.3C1.9 5 1.3 5.5 0.3 5.5C1.3 5.5 1.9 6 1.9 6.7V8.5C1.9 9.5 1.9 10.4 3.2 10.4M11.3 0.6C12.6 0.6 12.6 1.5 12.6 2.5V4.3C12.6 5 13.2 5.5 14.2 5.5C13.2 5.5 12.6 6 12.6 6.7V8.5C12.6 9.5 12.6 10.4 11.3 10.4" fill="none" stroke="#e6e6e6" stroke-width="1.3"/><rect x="4.6" y="8.9" width="1.3" height="1.3" fill="#ccc"/><rect x="6.6" y="8.9" width="1.3" height="1.3" fill="#ccc"/><rect x="8.6" y="8.9" width="1.3" height="1.3" fill="#ccc"/></svg>
<div class="t" style="left:398.8px;top:119px;font-size:14px;color:#e8e8e8;transform:scaleX(0.9535);transform-origin:0 0;">JSON</div>
<svg style="position:absolute;left:442.5px;top:122.8px;" width="8.2" height="8.2" viewBox="0 0 8.2 8.2"><path d="M0.5 0.5L7.699999999999999 7.699999999999999M7.699999999999999 0.5L0.5 7.699999999999999" stroke="#909090" stroke-width="1.15"/></svg>
<svg style="position:absolute;left:485.8px;top:122px;" width="10.5" height="9.5" viewBox="0 0 10.5 9.5"><svg viewBox="0 0 10 9" width="100%" height="100%" preserveAspectRatio="none"><rect x="0" y="0" width="10" height="9" rx="1" fill="#42a5f5"/><rect x="1.3" y="2.6" width="3.1" height="2.1" fill="#333"/><rect x="5.6" y="2.6" width="3.1" height="2.1" fill="#333"/><rect x="1.3" y="5.7" width="3.1" height="2" fill="#333"/><rect x="5.6" y="5.7" width="3.1" height="2" fill="#333"/></svg></svg>
<div class="t" style="left:503.7px;top:119px;font-size:14px;color:#e8e8e8;transform:scaleX(1.0085);transform-origin:0 0;">Customer</div>
<svg style="position:absolute;left:573.2px;top:122.8px;" width="8.2" height="8.2" viewBox="0 0 8.2 8.2"><path d="M0.5 0.5L7.699999999999999 7.699999999999999M7.699999999999999 0.5L0.5 7.699999999999999" stroke="#909090" stroke-width="1.15"/></svg>
<svg style="position:absolute;left:617px;top:122px;" width="10.5" height="9.5" viewBox="0 0 10.5 9.5"><svg viewBox="0 0 10 9" width="100%" height="100%" preserveAspectRatio="none"><rect x="0" y="0" width="10" height="9" rx="1" fill="#42a5f5"/><rect x="1.3" y="2.6" width="3.1" height="2.1" fill="#4b4b4b"/><rect x="5.6" y="2.6" width="3.1" height="2.1" fill="#4b4b4b"/><rect x="1.3" y="5.7" width="3.1" height="2" fill="#4b4b4b"/><rect x="5.6" y="5.7" width="3.1" height="2" fill="#4b4b4b"/></svg></svg>
<div class="t" style="left:634.8px;top:119px;font-size:14px;color:#e8e8e8;transform:scaleX(0.9586);transform-origin:0 0;">Genre</div>
<svg style="position:absolute;left:680.8px;top:122.8px;" width="8.2" height="8.2" viewBox="0 0 8.2 8.2"><path d="M0.5 0.5L7.699999999999999 7.699999999999999M7.699999999999999 0.5L0.5 7.699999999999999" stroke="#909090" stroke-width="1.15"/></svg>
<svg style="position:absolute;left:723.8px;top:122px;" width="10.5" height="9.5" viewBox="0 0 10.5 9.5"><svg viewBox="0 0 10 9" width="100%" height="100%" preserveAspectRatio="none"><rect x="0" y="0" width="10" height="9" rx="1" fill="#42a5f5"/><rect x="1.3" y="2.6" width="3.1" height="2.1" fill="#4b4b4b"/><rect x="5.6" y="2.6" width="3.1" height="2.1" fill="#4b4b4b"/><rect x="1.3" y="5.7" width="3.1" height="2" fill="#4b4b4b"/><rect x="5.6" y="5.7" width="3.1" height="2" fill="#4b4b4b"/></svg></svg>
<div class="t" style="left:742.4px;top:119px;font-size:14px;color:#e8e8e8;transform:scaleX(1.0103);transform-origin:0 0;">Playlist</div>
<svg style="position:absolute;left:795.5px;top:122.8px;" width="8.2" height="8.2" viewBox="0 0 8.2 8.2"><path d="M0.5 0.5L7.699999999999999 7.699999999999999M7.699999999999999 0.5L0.5 7.699999999999999" stroke="#909090" stroke-width="1.15"/></svg>
<svg style="position:absolute;left:838.7px;top:122px;" width="10.5" height="9.5" viewBox="0 0 10.5 9.5"><svg viewBox="0 0 10 9" width="100%" height="100%" preserveAspectRatio="none"><rect x="0" y="0" width="10" height="9" rx="1" fill="#42a5f5"/><rect x="1.3" y="2.6" width="3.1" height="2.1" fill="#4b4b4b"/><rect x="5.6" y="2.6" width="3.1" height="2.1" fill="#4b4b4b"/><rect x="1.3" y="5.7" width="3.1" height="2" fill="#4b4b4b"/><rect x="5.6" y="5.7" width="3.1" height="2" fill="#4b4b4b"/></svg></svg>
<div class="t" style="left:856.6px;top:119px;font-size:14px;color:#e8e8e8;">PlaylistTrack</div>
<svg style="position:absolute;left:943.6px;top:122.8px;" width="8.2" height="8.2" viewBox="0 0 8.2 8.2"><path d="M0.5 0.5L7.699999999999999 7.699999999999999M7.699999999999999 0.5L0.5 7.699999999999999" stroke="#909090" stroke-width="1.15"/></svg>
<svg style="position:absolute;left:988px;top:122px;" width="10.5" height="9.5" viewBox="0 0 10.5 9.5"><svg viewBox="0 0 10 9" width="100%" height="100%" preserveAspectRatio="none"><rect x="0" y="0" width="10" height="9" rx="1" fill="#e84749"/><rect x="1.3" y="2.6" width="3.1" height="2.1" fill="#4b4b4b"/><rect x="5.6" y="2.6" width="3.1" height="2.1" fill="#4b4b4b"/><rect x="1.3" y="5.7" width="3.1" height="2" fill="#4b4b4b"/><rect x="5.6" y="5.7" width="3.1" height="2" fill="#4b4b4b"/></svg></svg>
<div class="t" style="left:1005.3px;top:119px;font-size:14px;color:#e8e8e8;transform:scaleX(1.0211);transform-origin:0 0;">RiverInfo</div>
<svg style="position:absolute;left:1070.4px;top:122.8px;" width="8.2" height="8.2" viewBox="0 0 8.2 8.2"><path d="M0.5 0.5L7.699999999999999 7.699999999999999M7.699999999999999 0.5L0.5 7.699999999999999" stroke="#909090" stroke-width="1.15"/></svg>
<svg style="position:absolute;left:1114.6px;top:122px;" width="10.5" height="9.5" viewBox="0 0 10.5 9.5"><svg viewBox="0 0 10 9" width="100%" height="100%" preserveAspectRatio="none"><rect x="0" y="0" width="10" height="9" rx="1" fill="#e84749"/><rect x="1.3" y="2.6" width="3.1" height="2.1" fill="#4b4b4b"/><rect x="5.6" y="2.6" width="3.1" height="2.1" fill="#4b4b4b"/><rect x="1.3" y="5.7" width="3.1" height="2" fill="#4b4b4b"/><rect x="5.6" y="5.7" width="3.1" height="2" fill="#4b4b4b"/></svg></svg>
<div class="t" style="left:1131.9px;top:119px;font-size:14px;color:#e8e8e8;transform:scaleX(1.0322);transform-origin:0 0;">SectionInfo</div>
<svg style="position:absolute;left:1212px;top:122.8px;" width="8.2" height="8.2" viewBox="0 0 8.2 8.2"><path d="M0.5 0.5L7.699999999999999 7.699999999999999M7.699999999999999 0.5L0.5 7.699999999999999" stroke="#909090" stroke-width="1.15"/></svg>
<svg style="position:absolute;left:1256.3px;top:122px;" width="10.5" height="9.5" viewBox="0 0 10.5 9.5"><svg viewBox="0 0 10 9" width="100%" height="100%" preserveAspectRatio="none"><rect x="0" y="0" width="10" height="9" rx="1" fill="#e84749"/><rect x="1.3" y="2.6" width="3.1" height="2.1" fill="#4b4b4b"/><rect x="5.6" y="2.6" width="3.1" height="2.1" fill="#4b4b4b"/><rect x="1.3" y="5.7" width="3.1" height="2" fill="#4b4b4b"/><rect x="5.6" y="5.7" width="3.1" height="2" fill="#4b4b4b"/></svg></svg>
<div class="t" style="left:1273.5px;top:119px;font-size:14px;color:#e8e8e8;transform:scaleX(1.1308);transform-origin:0 0;">collection</div>
<div style="left:365px;top:142px;width:970px;height:6px;background:#383838;"></div>
<div style="left:365px;top:142px;width:929px;height:6px;background:#676767;"></div>
<div style="left:365px;top:148px;width:959px;height:621px;background:#555555;"></div>
<div style="left:366px;top:148px;width:40px;height:22px;background:#333333;"></div>
<div style="left:366px;top:171px;width:40px;height:21px;background:#333333;"></div>
<div style="left:407px;top:148px;width:146px;height:22px;background:#333333;"></div>
<div style="left:407px;top:171px;width:146px;height:21px;background:#333333;"></div>
<div style="left:554px;top:148px;width:137px;height:22px;background:#333333;"></div>
<div style="left:554px;top:171px;width:137px;height:21px;background:#333333;"></div>
<div style="left:692px;top:148px;width:135px;height:22px;background:#333333;"></div>
<div style="left:692px;top:171px;width:135px;height:21px;background:#333333;"></div>
<div style="left:828px;top:148px;width:325px;height:22px;background:#333333;"></div>
<div style="left:828px;top:171px;width:325px;height:21px;background:#333333;"></div>
<div style="left:1154px;top:148px;width:170px;height:22px;background:#333333;"></div>
<div style="left:1154px;top:171px;width:170px;height:21px;background:#333333;"></div>
<svg style="position:absolute;left:380px;top:155.5px;" width="12" height="7" viewBox="0 0 12 7"><path d="M0.5 0.5l2.6 3-2.6 3M4.3 0.5l2.6 3-2.6 3M8.1 0.5l2.6 3-2.6 3" fill="none" stroke="#aaa" stroke-width="1"/></svg>
<div class="t" style="left:410px;top:151.3px;font-size:14px;color:#f2f2f2;font-weight:bold;transform:scaleX(0.9963);transform-origin:0 0;">CustomerId</div>
<div style="left:550px;top:148px;width:3px;height:22px;background:#5a5a5a;"></div>
<div style="left:505px;top:171px;width:48px;height:21px;background:#585858;"></div>
<div style="left:528px;top:149px;width:22px;height:21px;background:none;background:linear-gradient(#3c3c3c,#5e5e5e);border:1px solid #5c5c5c;"></div>
<svg style="position:absolute;left:535.7px;top:158px;" width="6.5" height="3.5" viewBox="0 0 6.5 3.5"><path d="M0.5 0.5L3.25 3L6 0.5" fill="none" stroke="#e0e0e0" stroke-width="1.1"/></svg>
<div style="left:408px;top:172px;width:97px;height:19px;background:#111111;"></div>
<div style="left:506px;top:171px;width:21px;height:20.5px;background:none;background:linear-gradient(#3c3c3c,#5e5e5e);border:1px solid #5c5c5c;"></div>
<div style="left:529px;top:171px;width:21px;height:20.5px;background:none;background:linear-gradient(#3c3c3c,#5e5e5e);border:1px solid #5c5c5c;"></div>
<svg style="position:absolute;left:516.2px;top:177.4px;" width="1.7" height="8" viewBox="0 0 1.7 8"><rect x="0" y="0" width="1.7" height="1.7" fill="#e0e0e0"/><rect x="0" y="3.1" width="1.7" height="1.7" fill="#e0e0e0"/><rect x="0" y="6.2" width="1.7" height="1.7" fill="#e0e0e0"/></svg>
<svg style="position:absolute;left:534.8px;top:177px;" width="8.4" height="9.2" viewBox="0 0 8.4 9.2"><path d="M0 0H8.4L5.2 4.3V9.2L3.2 8V4.3Z" fill="#eee"/></svg>
<div class="t" style="left:410.5px;top:174px;font-size:13px;color:#7a7a7a;transform:scaleX(0.9346);transform-origin:0 0;">Filter</div>
<div class="t" style="left:557px;top:151.3px;font-size:14px;color:#f2f2f2;font-weight:bold;transform:scaleX(1.0078);transform-origin:0 0;">FirstName</div>
<div style="left:688px;top:148px;width:3px;height:22px;background:#5a5a5a;"></div>
<div style="left:643px;top:171px;width:48px;height:21px;background:#585858;"></div>
<div style="left:666px;top:149px;width:22px;height:21px;background:none;background:linear-gradient(#3c3c3c,#5e5e5e);border:1px solid #5c5c5c;"></div>
<svg style="position:absolute;left:673.7px;top:158px;" width="6.5" height="3.5" viewBox="0 0 6.5 3.5"><path d="M0.5 0.5L3.25 3L6 0.5" fill="none" stroke="#e0e0e0" stroke-width="1.1"/></svg>
<div style="left:554px;top:172px;width:89px;height:19px;background:#111111;"></div>
<div style="left:644px;top:171px;width:21px;height:20.5px;background:none;background:linear-gradient(#3c3c3c,#5e5e5e);border:1px solid #5c5c5c;"></div>
<div style="left:667px;top:171px;width:21px;height:20.5px;background:none;background:linear-gradient(#3c3c3c,#5e5e5e);border:1px solid #5c5c5c;"></div>
<svg style="position:absolute;left:654.2px;top:177.4px;" width="1.7" height="8" viewBox="0 0 1.7 8"><rect x="0" y="0" width="1.7" height="1.7" fill="#e0e0e0"/><rect x="0" y="3.1" width="1.7" height="1.7" fill="#e0e0e0"/><rect x="0" y="6.2" width="1.7" height="1.7" fill="#e0e0e0"/></svg>
<svg style="position:absolute;left:672.8px;top:177px;" width="8.4" height="9.2" viewBox="0 0 8.4 9.2"><path d="M0 0H8.4L5.2 4.3V9.2L3.2 8V4.3Z" fill="#eee"/></svg>
<div class="t" style="left:556.5px;top:174px;font-size:13px;color:#7a7a7a;transform:scaleX(0.9346);transform-origin:0 0;">Filter</div>
<div class="t" style="left:695px;top:151.3px;font-size:14px;color:#f2f2f2;font-weight:bold;">LastName</div>
<div style="left:824px;top:148px;width:3px;height:22px;background:#5a5a5a;"></div>
<div style="left:779px;top:171px;width:48px;height:21px;background:#585858;"></div>
<div style="left:802px;top:149px;width:22px;height:21px;background:none;background:linear-gradient(#3c3c3c,#5e5e5e);border:1px solid #5c5c5c;"></div>
<svg style="position:absolute;left:809.7px;top:158px;" width="6.5" height="3.5" viewBox="0 0 6.5 3.5"><path d="M0.5 0.5L3.25 3L6 0.5" fill="none" stroke="#e0e0e0" stroke-width="1.1"/></svg>
<div style="left:692px;top:172px;width:87px;height:19px;background:#111111;"></div>
<div style="left:780px;top:171px;width:21px;height:20.5px;background:none;background:linear-gradient(#3c3c3c,#5e5e5e);border:1px solid #5c5c5c;"></div>
<div style="left:803px;top:171px;width:21px;height:20.5px;background:none;background:linear-gradient(#3c3c3c,#5e5e5e);border:1px solid #5c5c5c;"></div>
<svg style="position:absolute;left:790.2px;top:177.4px;" width="1.7" height="8" viewBox="0 0 1.7 8"><rect x="0" y="0" width="1.7" height="1.7" fill="#e0e0e0"/><rect x="0" y="3.1" width="1.7" height="1.7" fill="#e0e0e0"/><rect x="0" y="6.2" width="1.7" height="1.7" fill="#e0e0e0"/></svg>
<svg style="position:absolute;left:808.8px;top:177px;" width="8.4" height="9.2" viewBox="0 0 8.4 9.2"><path d="M0 0H8.4L5.2 4.3V9.2L3.2 8V4.3Z" fill="#eee"/></svg>
<div class="t" style="left:694.5px;top:174px;font-size:13px;color:#7a7a7a;transform:scaleX(0.9346);transform-origin:0 0;">Filter</div>
<div class="t" style="left:831px;top:151.3px;font-size:14px;color:#f2f2f2;transform:scaleX(0.9847);transform-origin:0 0;">Company</div>
<div style="left:1150px;top:148px;width:3px;height:22px;background:#5a5a5a;"></div>
<div style="left:1105px;top:171px;width:48px;height:21px;background:#585858;"></div>
<div style="left:1128px;top:149px;width:22px;height:21px;background:none;background:linear-gradient(#3c3c3c,#5e5e5e);border:1px solid #5c5c5c;"></div>
<svg style="position:absolute;left:1135.7px;top:158px;" width="6.5" height="3.5" viewBox="0 0 6.5 3.5"><path d="M0.5 0.5L3.25 3L6 0.5" fill="none" stroke="#e0e0e0" stroke-width="1.1"/></svg>
<div style="left:828px;top:172px;width:277px;height:19px;background:#111111;"></div>
<div style="left:1106px;top:171px;width:21px;height:20.5px;background:none;background:linear-gradient(#3c3c3c,#5e5e5e);border:1px solid #5c5c5c;"></div>
<div style="left:1129px;top:171px;width:21px;height:20.5px;background:none;background:linear-gradient(#3c3c3c,#5e5e5e);border:1px solid #5c5c5c;"></div>
<svg style="position:absolute;left:1116.2px;top:177.4px;" width="1.7" height="8" viewBox="0 0 1.7 8"><rect x="0" y="0" width="1.7" height="1.7" fill="#e0e0e0"/><rect x="0" y="3.1" width="1.7" height="1.7" fill="#e0e0e0"/><rect x="0" y="6.2" width="1.7" height="1.7" fill="#e0e0e0"/></svg>
<svg style="position:absolute;left:1134.8px;top:177px;" width="8.4" height="9.2" viewBox="0 0 8.4 9.2"><path d="M0 0H8.4L5.2 4.3V9.2L3.2 8V4.3Z" fill="#eee"/></svg>
<div class="t" style="left:830.5px;top:174px;font-size:13px;color:#7a7a7a;transform:scaleX(0.9346);transform-origin:0 0;">Filter</div>
<div class="t" style="left:1157px;top:151.3px;font-size:14px;color:#f2f2f2;transform:scaleX(0.9930);transform-origin:0 0;">Address</div>
<div style="left:1154px;top:172px;width:170px;height:19px;background:#111111;"></div>
<div class="t" style="left:1156.5px;top:174px;font-size:13px;color:#7a7a7a;transform:scaleX(0.9346);transform-origin:0 0;">Filter</div>
<div style="left:366px;top:193px;width:40px;height:21px;background:#333333;"></div>
<div style="left:407px;top:193px;width:146px;height:21px;background:#111111;"></div>
<div style="left:554px;top:193px;width:137px;height:21px;background:#111111;"></div>
<div style="left:692px;top:193px;width:135px;height:21px;background:#111111;"></div>
<div style="left:828px;top:193px;width:325px;height:21px;background:#111111;"></div>
<div style="left:1154px;top:193px;width:170px;height:21px;background:#111111;"></div>
<div class="t" style="left:369px;top:195px;font-size:14px;color:#eeeeee;">1</div>
<div class="t" style="left:409.5px;top:195px;font-size:14px;color:#8fd460;">1</div>
<div class="t" style="left:556.5px;top:195px;font-size:14px;color:#f2f2f2;">Luís</div>
<div class="t" style="left:694.5px;top:195px;font-size:14px;color:#f2f2f2;">Gonçalves</div>
<div class="t" style="left:830.7px;top:195px;font-size:14px;color:#f2f2f2;transform:scaleX(0.9888);transform-origin:0 0;">Embraer - Empresa Brasileira de Aeronáutica S.A.</div>
<div class="t" style="left:1156.6px;top:195px;font-size:14px;color:#f2f2f2;">Av. Brigadeiro Faria Lima, 2170</div>
<div style="left:366px;top:215px;width:40px;height:21px;background:#333333;"></div>
<div style="left:407px;top:215px;width:146px;height:21px;background:#111111;"></div>
<div style="left:554px;top:215px;width:137px;height:21px;background:#111111;"></div>
<div style="left:692px;top:215px;width:135px;height:21px;background:#111111;"></div>
<div style="left:828px;top:215px;width:325px;height:21px;background:#111111;"></div>
<div style="left:1154px;top:215px;width:170px;height:21px;background:#111111;"></div>
<div class="t" style="left:369px;top:217px;font-size:14px;color:#eeeeee;">2</div>
<div class="t" style="left:409.5px;top:217px;font-size:14px;color:#8fd460;">2</div>
<div class="t" style="left:556.5px;top:217px;font-size:14px;color:#f2f2f2;">Leonie</div>
<div class="t" style="left:694.5px;top:217px;font-size:14px;color:#f2f2f2;">Köhler</div>
<div class="t" style="left:831px;top:217px;font-size:14px;color:#939393;font-style:italic;transform:scaleX(0.9220);transform-origin:0 0;">(NULL)</div>
<div class="t" style="left:1156.6px;top:217px;font-size:14px;color:#f2f2f2;">Theodor-Heuss-Straße 34</div>
<div style="left:366px;top:237px;width:40px;height:21px;background:#333333;"></div>
<div style="left:407px;top:237px;width:146px;height:21px;background:#333333;"></div>
<div style="left:554px;top:237px;width:137px;height:21px;background:#333333;"></div>
<div style="left:692px;top:237px;width:135px;height:21px;background:#333333;"></div>
<div style="left:828px;top:237px;width:325px;height:21px;background:#333333;"></div>
<div style="left:1154px;top:237px;width:170px;height:21px;background:#333333;"></div>
<div class="t" style="left:369px;top:239px;font-size:14px;color:#eeeeee;">3</div>
<div class="t" style="left:409.5px;top:239px;font-size:14px;color:#8fd460;">3</div>
<div class="t" style="left:556.5px;top:239px;font-size:14px;color:#f2f2f2;">François</div>
<div class="t" style="left:694.5px;top:239px;font-size:14px;color:#f2f2f2;">Tremblay</div>
<div class="t" style="left:831px;top:239px;font-size:14px;color:#939393;font-style:italic;transform:scaleX(0.9220);transform-origin:0 0;">(NULL)</div>
<div class="t" style="left:1156.6px;top:239px;font-size:14px;color:#f2f2f2;">1498 rue Bélanger</div>
<div style="left:366px;top:259px;width:40px;height:21px;background:#333333;"></div>
<div style="left:407px;top:259px;width:146px;height:21px;background:#111111;"></div>
<div style="left:554px;top:259px;width:137px;height:21px;background:#111111;"></div>
<div style="left:692px;top:259px;width:135px;height:21px;background:#111111;"></div>
<div style="left:828px;top:259px;width:325px;height:21px;background:#111111;"></div>
<div style="left:1154px;top:259px;width:170px;height:21px;background:#111111;"></div>
<div class="t" style="left:369px;top:261px;font-size:14px;color:#eeeeee;">4</div>
<div class="t" style="left:409.5px;top:261px;font-size:14px;color:#8fd460;">4</div>
<div class="t" style="left:556.5px;top:261px;font-size:14px;color:#f2f2f2;">Bjřrn</div>
<div class="t" style="left:694.5px;top:261px;font-size:14px;color:#f2f2f2;">Hansen</div>
<div class="t" style="left:831px;top:261px;font-size:14px;color:#939393;font-style:italic;transform:scaleX(0.9220);transform-origin:0 0;">(NULL)</div>
<div class="t" style="left:1156.6px;top:261px;font-size:14px;color:#f2f2f2;">UllevÍlsveien 14</div>
<div style="left:366px;top:281px;width:40px;height:21px;background:#333333;"></div>
<div style="left:407px;top:281px;width:146px;height:21px;background:#111111;"></div>
<div style="left:554px;top:281px;width:137px;height:21px;background:#15395b;"></div>
<div style="left:692px;top:281px;width:135px;height:21px;background:#15395b;"></div>
<div style="left:828px;top:281px;width:325px;height:21px;background:#15395b;"></div>
<div style="left:1154px;top:281px;width:170px;height:21px;background:#111111;"></div>
<div class="t" style="left:369px;top:283px;font-size:14px;color:#eeeeee;">5</div>
<div class="t" style="left:409.5px;top:283px;font-size:14px;color:#8fd460;">5</div>
<div class="t" style="left:556.5px;top:283px;font-size:14px;color:#f2f2f2;">Franti▯ek</div>
<div class="t" style="left:694.5px;top:283px;font-size:14px;color:#f2f2f2;">Wichterlová</div>
<div class="t" style="left:830.7px;top:283px;font-size:14px;color:#f2f2f2;">JetBrains s.r.o.</div>
<div class="t" style="left:1156.6px;top:283px;font-size:14px;color:#f2f2f2;">Klanova 9/506</div>
<div style="left:366px;top:303px;width:40px;height:21px;background:#333333;"></div>
<div style="left:407px;top:303px;width:146px;height:21px;background:#111d2c;"></div>
<div style="left:554px;top:303px;width:137px;height:21px;background:#15395b;"></div>
<div style="left:692px;top:303px;width:135px;height:21px;background:#15395b;"></div>
<div style="left:828px;top:303px;width:325px;height:21px;background:#15395b;"></div>
<div style="left:1154px;top:303px;width:170px;height:21px;background:#111d2c;"></div>
<div class="t" style="left:369px;top:305px;font-size:14px;color:#eeeeee;">6</div>
<div class="t" style="left:409.5px;top:305px;font-size:14px;color:#8fd460;">6</div>
<div class="t" style="left:556.5px;top:305px;font-size:14px;color:#f2f2f2;">Helena</div>
<div class="t" style="left:694.5px;top:305px;font-size:14px;color:#f2f2f2;">Holý</div>
<div class="t" style="left:831px;top:305px;font-size:14px;color:#939393;font-style:italic;transform:scaleX(0.9220);transform-origin:0 0;">(NULL)</div>
<div class="t" style="left:1156.6px;top:305px;font-size:14px;color:#f2f2f2;">Rilská 3174/6</div>
<div style="left:366px;top:325px;width:40px;height:21px;background:#333333;"></div>
<div style="left:407px;top:325px;width:146px;height:21px;background:#111111;"></div>
<div style="left:554px;top:325px;width:137px;height:21px;background:#15395b;"></div>
<div style="left:692px;top:325px;width:135px;height:21px;background:#15395b;"></div>
<div style="left:828px;top:325px;width:325px;height:21px;background:#15395b;"></div>
<div style="left:1154px;top:325px;width:170px;height:21px;background:#111111;"></div>
<div class="t" style="left:369px;top:327px;font-size:14px;color:#eeeeee;">7</div>
<div class="t" style="left:409.5px;top:327px;font-size:14px;color:#8fd460;">7</div>
<div class="t" style="left:556.5px;top:327px;font-size:14px;color:#f2f2f2;">Astrid</div>
<div class="t" style="left:694.5px;top:327px;font-size:14px;color:#f2f2f2;">Gruber</div>
<div class="t" style="left:831px;top:327px;font-size:14px;color:#939393;font-style:italic;transform:scaleX(0.9220);transform-origin:0 0;">(NULL)</div>
<div class="t" style="left:1156.6px;top:327px;font-size:14px;color:#f2f2f2;">Rotenturmstraße 4, 1010 Innere Stadt</div>
<div style="left:366px;top:347px;width:40px;height:21px;background:#333333;"></div>
<div style="left:407px;top:347px;width:146px;height:21px;background:#111111;"></div>
<div style="left:554px;top:347px;width:137px;height:21px;background:#15395b;"></div>
<div style="left:692px;top:347px;width:135px;height:21px;background:#15395b;"></div>
<div style="left:828px;top:347px;width:325px;height:21px;background:#15395b;"></div>
<div style="left:1154px;top:347px;width:170px;height:21px;background:#111111;"></div>
<div class="t" style="left:369px;top:349px;font-size:14px;color:#eeeeee;">8</div>
<div class="t" style="left:409.5px;top:349px;font-size:14px;color:#8fd460;">8</div>
<div class="t" style="left:556.5px;top:349px;font-size:14px;color:#f2f2f2;">Daan</div>
<div class="t" style="left:694.5px;top:349px;font-size:14px;color:#f2f2f2;">Peeters</div>
<div class="t" style="left:831px;top:349px;font-size:14px;color:#939393;font-style:italic;transform:scaleX(0.9220);transform-origin:0 0;">(NULL)</div>
<div class="t" style="left:1156.6px;top:349px;font-size:14px;color:#f2f2f2;">Grétrystraat 63</div>
<div style="left:366px;top:369px;width:40px;height:21px;background:#333333;"></div>
<div style="left:407px;top:369px;width:146px;height:21px;background:#333333;"></div>
<div style="left:554px;top:369px;width:137px;height:21px;background:#15395b;"></div>
<div style="left:692px;top:369px;width:135px;height:21px;background:#15395b;"></div>
<div style="left:828px;top:369px;width:325px;height:21px;background:#15395b;"></div>
<div style="left:1154px;top:369px;width:170px;height:21px;background:#333333;"></div>
<div class="t" style="left:369px;top:371px;font-size:14px;color:#eeeeee;">9</div>
<div class="t" style="left:409.5px;top:371px;font-size:14px;color:#8fd460;">9</div>
<div class="t" style="left:556.5px;top:371px;font-size:14px;color:#f2f2f2;">Kara</div>
<div class="t" style="left:694.5px;top:371px;font-size:14px;color:#f2f2f2;">Nielsen</div>
<div class="t" style="left:831px;top:371px;font-size:14px;color:#939393;font-style:italic;transform:scaleX(0.9220);transform-origin:0 0;">(NULL)</div>
<div class="t" style="left:1156.6px;top:371px;font-size:14px;color:#f2f2f2;">Sřnder Boulevard 51</div>
<div style="left:366px;top:391px;width:40px;height:21px;background:#333333;"></div>
<div style="left:407px;top:391px;width:146px;height:21px;background:#111111;"></div>
<div style="left:554px;top:391px;width:137px;height:21px;background:#15395b;"></div>
<div style="left:692px;top:391px;width:135px;height:21px;background:#15395b;"></div>
<div style="left:828px;top:391px;width:325px;height:21px;background:#15395b;"></div>
<div style="left:1154px;top:391px;width:170px;height:21px;background:#111111;"></div>
<div class="t" style="left:369px;top:393px;font-size:14px;color:#eeeeee;">10</div>
<div class="t" style="left:409.5px;top:393px;font-size:14px;color:#8fd460;">10</div>
<div class="t" style="left:556.5px;top:393px;font-size:14px;color:#f2f2f2;">Eduardo</div>
<div class="t" style="left:694.5px;top:393px;font-size:14px;color:#f2f2f2;">Martins</div>
<div class="t" style="left:830.7px;top:393px;font-size:14px;color:#f2f2f2;">Woodstock Discos</div>
<div class="t" style="left:1156.6px;top:393px;font-size:14px;color:#f2f2f2;">Rua Dr. Falcão Filho, 155</div>
<div style="left:366px;top:413px;width:40px;height:21px;background:#333333;"></div>
<div style="left:407px;top:413px;width:146px;height:21px;background:#111111;"></div>
<div style="left:554px;top:413px;width:137px;height:21px;background:#15395b;"></div>
<div style="left:692px;top:413px;width:135px;height:21px;background:#15395b;"></div>
<div style="left:828px;top:413px;width:325px;height:21px;background:#15395b;"></div>
<div style="left:1154px;top:413px;width:170px;height:21px;background:#111111;"></div>
<div class="t" style="left:369px;top:415px;font-size:14px;color:#eeeeee;">11</div>
<div class="t" style="left:409.5px;top:415px;font-size:14px;color:#8fd460;">11</div>
<div class="t" style="left:556.5px;top:415px;font-size:14px;color:#f2f2f2;">Alexandre</div>
<div class="t" style="left:694.5px;top:415px;font-size:14px;color:#f2f2f2;">Rocha</div>
<div class="t" style="left:830.7px;top:415px;font-size:14px;color:#f2f2f2;">Banco do Brasil S.A.</div>
<div class="t" style="left:1156.6px;top:415px;font-size:14px;color:#f2f2f2;">Av. Paulista, 2022</div>
<div style="left:366px;top:435px;width:40px;height:21px;background:#333333;"></div>
<div style="left:407px;top:435px;width:146px;height:21px;background:#111d2c;"></div>
<div style="left:554px;top:435px;width:137px;height:21px;background:#15395b;"></div>
<div style="left:692px;top:435px;width:135px;height:21px;background:#15395b;"></div>
<div style="left:828px;top:435px;width:325px;height:21px;background:#15395b;"></div>
<div style="left:1154px;top:435px;width:170px;height:21px;background:#111d2c;"></div>
<div class="t" style="left:369px;top:437px;font-size:14px;color:#eeeeee;">12</div>
<div class="t" style="left:409.5px;top:437px;font-size:14px;color:#8fd460;">12</div>
<div class="t" style="left:556.5px;top:437px;font-size:14px;color:#f2f2f2;">Roberto</div>
<div class="t" style="left:694.5px;top:437px;font-size:14px;color:#f2f2f2;">Almeida</div>
<div class="t" style="left:830.7px;top:437px;font-size:14px;color:#f2f2f2;">Riotur</div>
<div class="t" style="left:1156.6px;top:437px;font-size:14px;color:#f2f2f2;">Praça Pio X, 119</div>
<div style="left:366px;top:457px;width:40px;height:21px;background:#333333;"></div>
<div style="left:407px;top:457px;width:146px;height:21px;background:#111111;"></div>
<div style="left:554px;top:457px;width:137px;height:21px;background:#15395b;"></div>
<div style="left:692px;top:457px;width:135px;height:21px;background:#15395b;"></div>
<div style="left:828px;top:457px;width:325px;height:21px;background:#15395b;"></div>
<div style="left:1154px;top:457px;width:170px;height:21px;background:#111111;"></div>
<div class="t" style="left:369px;top:459px;font-size:14px;color:#eeeeee;">13</div>
<div class="t" style="left:409.5px;top:459px;font-size:14px;color:#8fd460;">13</div>
<div class="t" style="left:556.5px;top:459px;font-size:14px;color:#f2f2f2;">Fernanda</div>
<div class="t" style="left:694.5px;top:459px;font-size:14px;color:#f2f2f2;">Ramos</div>
<div class="t" style="left:831px;top:459px;font-size:14px;color:#939393;font-style:italic;transform:scaleX(0.9220);transform-origin:0 0;">(NULL)</div>
<div class="t" style="left:1156.6px;top:459px;font-size:14px;color:#f2f2f2;">Qe 7 Bloco G</div>
<div style="left:366px;top:479px;width:40px;height:21px;background:#333333;"></div>
<div style="left:407px;top:479px;width:146px;height:21px;background:#111111;"></div>
<div style="left:554px;top:479px;width:137px;height:21px;background:#15395b;"></div>
<div style="left:692px;top:479px;width:135px;height:21px;background:#15395b;"></div>
<div style="left:828px;top:479px;width:325px;height:21px;background:#15395b;"></div>
<div style="left:1154px;top:479px;width:170px;height:21px;background:#111111;"></div>
<div class="t" style="left:369px;top:481px;font-size:14px;color:#eeeeee;">14</div>
<div class="t" style="left:409.5px;top:481px;font-size:14px;color:#8fd460;">14</div>
<div class="t" style="left:556.5px;top:481px;font-size:14px;color:#f2f2f2;">Mark</div>
<div class="t" style="left:694.5px;top:481px;font-size:14px;color:#f2f2f2;">Philips</div>
<div class="t" style="left:830.7px;top:481px;font-size:14px;color:#f2f2f2;">Telus</div>
<div class="t" style="left:1156.6px;top:481px;font-size:14px;color:#f2f2f2;">8210 111 ST NW</div>
<div style="left:366px;top:501px;width:40px;height:21px;background:#333333;"></div>
<div style="left:407px;top:501px;width:146px;height:21px;background:#333333;"></div>
<div style="left:554px;top:501px;width:137px;height:21px;background:#15395b;"></div>
<div style="left:692px;top:501px;width:135px;height:21px;background:#15395b;"></div>
<div style="left:828px;top:501px;width:325px;height:21px;background:#15395b;"></div>
<div style="left:1154px;top:501px;width:170px;height:21px;background:#333333;"></div>
<div class="t" style="left:369px;top:503px;font-size:14px;color:#eeeeee;">15</div>
<div class="t" style="left:409.5px;top:503px;font-size:14px;color:#8fd460;">15</div>
<div class="t" style="left:556.5px;top:503px;font-size:14px;color:#f2f2f2;">Jennifer</div>
<div class="t" style="left:694.5px;top:503px;font-size:14px;color:#f2f2f2;">Peterson</div>
<div class="t" style="left:830.7px;top:503px;font-size:14px;color:#f2f2f2;">Rogers Canada</div>
<div class="t" style="left:1156.6px;top:503px;font-size:14px;color:#f2f2f2;">700 W Pender Street</div>
<div style="left:366px;top:523px;width:40px;height:21px;background:#333333;"></div>
<div style="left:407px;top:523px;width:146px;height:21px;background:#111111;"></div>
<div style="left:554px;top:523px;width:137px;height:21px;background:#15395b;"></div>
<div style="left:692px;top:523px;width:135px;height:21px;background:#15395b;"></div>
<div style="left:828px;top:523px;width:325px;height:21px;background:#15395b;"></div>
<div style="left:1154px;top:523px;width:170px;height:21px;background:#111111;"></div>
<div class="t" style="left:369px;top:525px;font-size:14px;color:#eeeeee;">16</div>
<div class="t" style="left:409.5px;top:525px;font-size:14px;color:#8fd460;">16</div>
<div class="t" style="left:556.5px;top:525px;font-size:14px;color:#f2f2f2;">Frank</div>
<div class="t" style="left:694.5px;top:525px;font-size:14px;color:#f2f2f2;">Harris</div>
<div class="t" style="left:830.7px;top:525px;font-size:14px;color:#f2f2f2;">Google Inc.</div>
<div class="t" style="left:1156.6px;top:525px;font-size:14px;color:#f2f2f2;">1600 Amphitheatre Parkway</div>
<div style="left:366px;top:545px;width:40px;height:21px;background:#333333;"></div>
<div style="left:407px;top:545px;width:146px;height:21px;background:#111111;"></div>
<div style="left:554px;top:545px;width:137px;height:21px;background:#111111;"></div>
<div style="left:692px;top:545px;width:135px;height:21px;background:#111111;"></div>
<div style="left:828px;top:545px;width:325px;height:21px;background:#111111;"></div>
<div style="left:1154px;top:545px;width:170px;height:21px;background:#111111;"></div>
<div class="t" style="left:369px;top:547px;font-size:14px;color:#eeeeee;">17</div>
<div class="t" style="left:409.5px;top:547px;font-size:14px;color:#8fd460;">17</div>
<div class="t" style="left:556.5px;top:547px;font-size:14px;color:#f2f2f2;">Jack</div>
<div class="t" style="left:694.5px;top:547px;font-size:14px;color:#f2f2f2;">Smith</div>
<div class="t" style="left:830.7px;top:547px;font-size:14px;color:#f2f2f2;">Microsoft Corporation</div>
<div class="t" style="left:1156.6px;top:547px;font-size:14px;color:#f2f2f2;">1 Microsoft Way</div>
<div style="left:366px;top:567px;width:40px;height:21px;background:#333333;"></div>
<div style="left:407px;top:567px;width:146px;height:21px;background:#111d2c;"></div>
<div style="left:554px;top:567px;width:137px;height:21px;background:#111d2c;"></div>
<div style="left:692px;top:567px;width:135px;height:21px;background:#111d2c;"></div>
<div style="left:828px;top:567px;width:325px;height:21px;background:#111d2c;"></div>
<div style="left:1154px;top:567px;width:170px;height:21px;background:#111d2c;"></div>
<div class="t" style="left:369px;top:569px;font-size:14px;color:#eeeeee;">18</div>
<div class="t" style="left:409.5px;top:569px;font-size:14px;color:#8fd460;">18</div>
<div class="t" style="left:556.5px;top:569px;font-size:14px;color:#f2f2f2;">Michelle</div>
<div class="t" style="left:694.5px;top:569px;font-size:14px;color:#f2f2f2;">Brooks</div>
<div class="t" style="left:831px;top:569px;font-size:14px;color:#939393;font-style:italic;transform:scaleX(0.9220);transform-origin:0 0;">(NULL)</div>
<div class="t" style="left:1156.6px;top:569px;font-size:14px;color:#f2f2f2;">627 Broadway</div>
<div style="left:366px;top:589px;width:40px;height:21px;background:#333333;"></div>
<div style="left:407px;top:589px;width:146px;height:21px;background:#111111;"></div>
<div style="left:554px;top:589px;width:137px;height:21px;background:#111111;"></div>
<div style="left:692px;top:589px;width:135px;height:21px;background:#111111;"></div>
<div style="left:828px;top:589px;width:325px;height:21px;background:#111111;"></div>
<div style="left:1154px;top:589px;width:170px;height:21px;background:#111111;"></div>
<div class="t" style="left:369px;top:591px;font-size:14px;color:#eeeeee;">19</div>
<div class="t" style="left:409.5px;top:591px;font-size:14px;color:#8fd460;">19</div>
<div class="t" style="left:556.5px;top:591px;font-size:14px;color:#f2f2f2;">Tim</div>
<div class="t" style="left:694.5px;top:591px;font-size:14px;color:#f2f2f2;">Goyer</div>
<div class="t" style="left:830.7px;top:591px;font-size:14px;color:#f2f2f2;">Apple Inc.</div>
<div class="t" style="left:1156.6px;top:591px;font-size:14px;color:#f2f2f2;">1 Infinite Loop</div>
<div style="left:366px;top:611px;width:40px;height:21px;background:#333333;"></div>
<div style="left:407px;top:611px;width:146px;height:21px;background:#111111;"></div>
<div style="left:554px;top:611px;width:137px;height:21px;background:#111111;"></div>
<div style="left:692px;top:611px;width:135px;height:21px;background:#111111;"></div>
<div style="left:828px;top:611px;width:325px;height:21px;background:#111111;"></div>
<div style="left:1154px;top:611px;width:170px;height:21px;background:#111111;"></div>
<div class="t" style="left:369px;top:613px;font-size:14px;color:#eeeeee;">20</div>
<div class="t" style="left:409.5px;top:613px;font-size:14px;color:#8fd460;">20</div>
<div class="t" style="left:556.5px;top:613px;font-size:14px;color:#f2f2f2;">Dan</div>
<div class="t" style="left:694.5px;top:613px;font-size:14px;color:#f2f2f2;">Miller</div>
<div class="t" style="left:831px;top:613px;font-size:14px;color:#939393;font-style:italic;transform:scaleX(0.9220);transform-origin:0 0;">(NULL)</div>
<div class="t" style="left:1156.6px;top:613px;font-size:14px;color:#f2f2f2;">541 Del Medio Avenue</div>
<div style="left:366px;top:633px;width:40px;height:21px;background:#333333;"></div>
<div style="left:407px;top:633px;width:146px;height:21px;background:#333333;"></div>
<div style="left:554px;top:633px;width:137px;height:21px;background:#333333;"></div>
<div style="left:692px;top:633px;width:135px;height:21px;background:#333333;"></div>
<div style="left:828px;top:633px;width:325px;height:21px;background:#333333;"></div>
<div style="left:1154px;top:633px;width:170px;height:21px;background:#333333;"></div>
<div class="t" style="left:369px;top:635px;font-size:14px;color:#eeeeee;">21</div>
<div class="t" style="left:409.5px;top:635px;font-size:14px;color:#8fd460;">21</div>
<div class="t" style="left:556.5px;top:635px;font-size:14px;color:#f2f2f2;">Kathy</div>
<div class="t" style="left:694.5px;top:635px;font-size:14px;color:#f2f2f2;">Chase</div>
<div class="t" style="left:831px;top:635px;font-size:14px;color:#939393;font-style:italic;transform:scaleX(0.9220);transform-origin:0 0;">(NULL)</div>
<div class="t" style="left:1156.6px;top:635px;font-size:14px;color:#f2f2f2;">801 W 4th Street</div>
<div style="left:366px;top:655px;width:40px;height:21px;background:#333333;"></div>
<div style="left:407px;top:655px;width:146px;height:21px;background:#111111;"></div>
<div style="left:554px;top:655px;width:137px;height:21px;background:#111111;"></div>
<div style="left:692px;top:655px;width:135px;height:21px;background:#111111;"></div>
<div style="left:828px;top:655px;width:325px;height:21px;background:#111111;"></div>
<div style="left:1154px;top:655px;width:170px;height:21px;background:#111111;"></div>
<div class="t" style="left:369px;top:657px;font-size:14px;color:#eeeeee;">22</div>
<div class="t" style="left:409.5px;top:657px;font-size:14px;color:#8fd460;">22</div>
<div class="t" style="left:556.5px;top:657px;font-size:14px;color:#f2f2f2;">Heather</div>
<div class="t" style="left:694.5px;top:657px;font-size:14px;color:#f2f2f2;">Leacock</div>
<div class="t" style="left:831px;top:657px;font-size:14px;color:#939393;font-style:italic;transform:scaleX(0.9220);transform-origin:0 0;">(NULL)</div>
<div class="t" style="left:1156.6px;top:657px;font-size:14px;color:#f2f2f2;">120 S Orange Ave</div>
<div style="left:366px;top:677px;width:40px;height:21px;background:#333333;"></div>
<div style="left:407px;top:677px;width:146px;height:21px;background:#111111;"></div>
<div style="left:554px;top:677px;width:137px;height:21px;background:#111111;"></div>
<div style="left:692px;top:677px;width:135px;height:21px;background:#111111;"></div>
<div style="left:828px;top:677px;width:325px;height:21px;background:#111111;"></div>
<div style="left:1154px;top:677px;width:170px;height:21px;background:#111111;"></div>
<div class="t" style="left:369px;top:679px;font-size:14px;color:#eeeeee;">23</div>
<div class="t" style="left:409.5px;top:679px;font-size:14px;color:#8fd460;">23</div>
<div class="t" style="left:556.5px;top:679px;font-size:14px;color:#f2f2f2;">John</div>
<div class="t" style="left:694.5px;top:679px;font-size:14px;color:#f2f2f2;">Gordon</div>
<div class="t" style="left:831px;top:679px;font-size:14px;color:#939393;font-style:italic;transform:scaleX(0.9220);transform-origin:0 0;">(NULL)</div>
<div class="t" style="left:1156.6px;top:679px;font-size:14px;color:#f2f2f2;">69 Salem Street</div>
<div style="left:366px;top:699px;width:40px;height:21px;background:#333333;"></div>
<div style="left:407px;top:699px;width:146px;height:21px;background:#111d2c;"></div>
<div style="left:554px;top:699px;width:137px;height:21px;background:#111d2c;"></div>
<div style="left:692px;top:699px;width:135px;height:21px;background:#111d2c;"></div>
<div style="left:828px;top:699px;width:325px;height:21px;background:#111d2c;"></div>
<div style="left:1154px;top:699px;width:170px;height:21px;background:#111d2c;"></div>
<div class="t" style="left:369px;top:701px;font-size:14px;color:#eeeeee;">24</div>
<div class="t" style="left:409.5px;top:701px;font-size:14px;color:#8fd460;">24</div>
<div class="t" style="left:556.5px;top:701px;font-size:14px;color:#f2f2f2;">Frank</div>
<div class="t" style="left:694.5px;top:701px;font-size:14px;color:#f2f2f2;">Ralston</div>
<div class="t" style="left:831px;top:701px;font-size:14px;color:#939393;font-style:italic;transform:scaleX(0.9220);transform-origin:0 0;">(NULL)</div>
<div class="t" style="left:1156.6px;top:701px;font-size:14px;color:#f2f2f2;">162 E Superior Street</div>
<div style="left:366px;top:721px;width:40px;height:21px;background:#333333;"></div>
<div style="left:407px;top:721px;width:146px;height:21px;background:#111111;"></div>
<div style="left:554px;top:721px;width:137px;height:21px;background:#111111;"></div>
<div style="left:692px;top:721px;width:135px;height:21px;background:#111111;"></div>
<div style="left:828px;top:721px;width:325px;height:21px;background:#111111;"></div>
<div style="left:1154px;top:721px;width:170px;height:21px;background:#111111;"></div>
<div class="t" style="left:369px;top:723px;font-size:14px;color:#eeeeee;">25</div>
<div class="t" style="left:409.5px;top:723px;font-size:14px;color:#8fd460;">25</div>
<div class="t" style="left:556.5px;top:723px;font-size:14px;color:#f2f2f2;">Victor</div>
<div class="t" style="left:694.5px;top:723px;font-size:14px;color:#f2f2f2;">Stevens</div>
<div class="t" style="left:831px;top:723px;font-size:14px;color:#939393;font-style:italic;transform:scaleX(0.9220);transform-origin:0 0;">(NULL)</div>
<div class="t" style="left:1156.6px;top:723px;font-size:14px;color:#f2f2f2;">319 N. Frances Street</div>
<div style="left:366px;top:743px;width:40px;height:21px;background:#333333;"></div>
<div style="left:407px;top:743px;width:146px;height:21px;background:#111111;"></div>
<div style="left:554px;top:743px;width:137px;height:21px;background:#111111;"></div>
<div style="left:692px;top:743px;width:135px;height:21px;background:#111111;"></div>
<div style="left:828px;top:743px;width:325px;height:21px;background:#111111;"></div>
<div style="left:1154px;top:743px;width:170px;height:21px;background:#111111;"></div>
<div class="t" style="left:369px;top:745px;font-size:14px;color:#eeeeee;">26</div>
<div class="t" style="left:409.5px;top:745px;font-size:14px;color:#8fd460;">26</div>
<div class="t" style="left:556.5px;top:745px;font-size:14px;color:#f2f2f2;">Richard</div>
<div class="t" style="left:694.5px;top:745px;font-size:14px;color:#f2f2f2;">Cunningham</div>
<div class="t" style="left:831px;top:745px;font-size:14px;color:#939393;font-style:italic;transform:scaleX(0.9220);transform-origin:0 0;">(NULL)</div>
<div style="left:366px;top:765px;width:40px;height:4px;background:#333333;"></div>
<div style="left:407px;top:765px;width:146px;height:4px;background:#333333;"></div>
<div style="left:554px;top:765px;width:137px;height:4px;background:#333333;"></div>
<div style="left:692px;top:765px;width:135px;height:4px;background:#333333;"></div>
<div style="left:828px;top:765px;width:325px;height:4px;background:#333333;"></div>
<div style="left:1154px;top:765px;width:170px;height:4px;background:#333333;"></div>
<div style="left:1125px;top:744px;width:170px;height:16px;background:#4d4d4d;"></div>
<div class="t" style="left:1126px;top:743.5px;font-size:14px;color:#e0e0e0;transform:scaleX(0.9595);transform-origin:0 0;">Rows: 12, Count: 36, Sum:0</div>
<div style="left:1324px;top:148px;width:11px;height:621px;background:#333333;"></div>
<div style="left:1324px;top:148px;width:11px;height:282px;background:#686868;"></div>
<div style="left:1324px;top:764px;width:11px;height:16px;background:#5a5a5a;"></div>
<div style="left:365px;top:769px;width:959px;height:11px;background:#3a3a3a;"></div>
<div style="left:365px;top:769px;width:413px;height:11px;background:#6a6a6a;"></div>
<div style="left:0px;top:780px;width:1339px;height:22px;background:#536d13;"></div>
<svg style="position:absolute;left:13.8px;top:785px;" width="10.2" height="11" viewBox="0 0 10.2 11"><ellipse cx="5.1" cy="2" rx="5.1" ry="2" fill="#e8e8e8"/><path d="M0 3.4A5.1 2 0 0 0 10.2 3.4V5.5A5.1 2 0 0 1 0 5.5Z" fill="#e8e8e8"/><path d="M0 6.9A5.1 2 0 0 0 10.2 6.9V9A5.1 2 0 0 1 0 9Z" fill="#e8e8e8"/></svg>
<div class="t" style="left:30.4px;top:782.5px;font-size:14px;color:#e8e8e8;transform:scaleX(0.9968);transform-origin:0 0;">Chinook</div>
<div style="left:102px;top:783px;width:20px;height:16px;background:#a3cf34;border-radius:2px;"></div>
<svg style="position:absolute;left:106px;top:786px;" width="12" height="12" viewBox="0 0 12 12"><path d="M6.5 0.5C2.9 0.5 0 3.1 0 6.3c0 3.2 2.9 5.7 6.5 5.7.6 0 1-.4 1-1 0-.3-.1-.5-.3-.7-.2-.2-.3-.4-.3-.7 0-.6.4-1 1-1h1.2c2 0 3.4-1.5 3.4-3.4C12.5 2.8 9.8.5 6.5.5z" fill="#111"/><circle cx="3" cy="6" r="1" fill="#a3cf34"/><circle cx="4.8" cy="3.3" r="1" fill="#a3cf34"/><circle cx="8" cy="3.1" r="1" fill="#a3cf34"/><circle cx="10" cy="5.6" r="1" fill="#a3cf34"/></svg>
<svg style="position:absolute;left:144px;top:784px;" width="10" height="13" viewBox="0 0 10 13"><rect x="0" y="0" width="10" height="3.4" rx="0.6" fill="#e8e8e8"/><rect x="0" y="4.8" width="10" height="3.4" rx="0.6" fill="#e8e8e8"/><rect x="0" y="9.6" width="10" height="3.4" rx="0.6" fill="#e8e8e8"/><rect x="1.5" y="1.2" width="2.5" height="1" fill="#536d13"/><rect x="1.5" y="6" width="2.5" height="1" fill="#536d13"/><rect x="1.5" y="10.8" width="2.5" height="1" fill="#536d13"/></svg>
<div class="t" style="left:160.6px;top:782.5px;font-size:14px;color:#e8e8e8;transform:scaleX(0.9859);transform-origin:0 0;">Postgre Local</div>
<div style="left:266px;top:783px;width:20px;height:16px;background:#cfcfcf;border-radius:2px;"></div>
<svg style="position:absolute;left:270px;top:786px;" width="12" height="12" viewBox="0 0 12 12"><path d="M6.5 0.5C2.9 0.5 0 3.1 0 6.3c0 3.2 2.9 5.7 6.5 5.7.6 0 1-.4 1-1 0-.3-.1-.5-.3-.7-.2-.2-.3-.4-.3-.7 0-.6.4-1 1-1h1.2c2 0 3.4-1.5 3.4-3.4C12.5 2.8 9.8.5 6.5.5z" fill="#111"/><circle cx="3" cy="6" r="1" fill="#cfcfcf"/><circle cx="4.8" cy="3.3" r="1" fill="#cfcfcf"/><circle cx="8" cy="3.1" r="1" fill="#cfcfcf"/><circle cx="10" cy="5.6" r="1" fill="#cfcfcf"/></svg>
<svg style="position:absolute;left:308px;top:785px;" width="10" height="11" viewBox="0 0 10 11"><circle cx="5" cy="2.7" r="2.7" fill="#e8e8e8"/><path d="M0 11c0-2.6 2.2-4 5-4s5 1.4 5 4z" fill="#e8e8e8"/></svg>
<div class="t" style="left:324.4px;top:782.5px;font-size:14px;color:#e8e8e8;transform:scaleX(1.0187);transform-origin:0 0;">postgres</div>
<svg style="position:absolute;left:401px;top:785px;" width="12" height="12" viewBox="0 0 12 12"><circle cx="6" cy="6" r="6" fill="#73d13d"/><path d="M3 6.2l2.1 2.1L9.2 4" fill="none" stroke="#3b6324" stroke-width="1.3"/></svg>
<div class="t" style="left:418.3px;top:782.5px;font-size:14px;color:#e8e8e8;transform:scaleX(0.9850);transform-origin:0 0;">Connected</div>
<svg style="position:absolute;left:507.5px;top:786px;" width="12" height="9" viewBox="0 0 12 9"><path d="M0 0h12v3a1.5 1.5 0 0 0 0 3v3H0V6a1.5 1.5 0 0 0 0-3z" fill="#e8e8e8"/><rect x="5.3" y="1.5" width="1.4" height="1.4" fill="#536d13"/><rect x="5.3" y="3.8" width="1.4" height="1.4" fill="#536d13"/><rect x="5.3" y="6.1" width="1.4" height="1.4" fill="#536d13"/></svg>
<div class="t" style="left:524.7px;top:782.5px;font-size:14px;color:#e8e8e8;transform:scaleX(0.9702);transform-origin:0 0;">PostgreSQL 12.2</div>
<svg style="position:absolute;left:651.2px;top:785.8px;" width="11.5" height="10.3" viewBox="0 0 11.5 10.3"><svg viewBox="3.5 8 26.5 21" width="11.5" height="10.3"><path d="M9.9 18.3A9.3 9.3 0 1 1 13 25.25" fill="none" stroke="#e8e8e8" stroke-width="2.4"/><path d="M3.5 17.8H14.4L9.4 23.8Z" fill="#e8e8e8"/><path d="M19 13.5V19.5L23.5 22.5" fill="none" stroke="#e8e8e8" stroke-width="2.2"/></svg></svg>
<div class="t" style="left:672.6px;top:782.5px;font-size:14px;color:#e8e8e8;">3 minutes ago</div>
<svg style="position:absolute;left:1009px;top:785px;" width="12" height="11.5" viewBox="0 0 12 11.5"><path d="M1.2 1.2L10.8 10.8" stroke="#e8e8e8" stroke-width="2.2"/><path d="M1.2 10.8L8.4 3.6" stroke="#e8e8e8" stroke-width="2.2"/><path d="M7.2 2.4L9.6 0L12 2.4L9.6 4.8Z" fill="#e8e8e8"/><path d="M0 1.5L1.5 0L3 1.5L1.5 3Z" fill="#e8e8e8"/></svg>
<div class="t" style="left:1026.5px;top:782.5px;font-size:14px;color:#e8e8e8;transform:scaleX(1.0356);transform-origin:0 0;">Open structure</div>
<svg style="position:absolute;left:1145px;top:786px;" width="10" height="9" viewBox="0 0 10 9"><rect x="0.6" y="0.6" width="8.8" height="7.8" fill="none" stroke="#e8e8e8" stroke-width="1.2"/><path d="M3.5 1v7M6.5 1v7" stroke="#e8e8e8" stroke-width="1.1"/></svg>
<div class="t" style="left:1161px;top:782.5px;font-size:14px;color:#e8e8e8;transform:scaleX(1.0080);transform-origin:0 0;">View columns</div>
<div class="t" style="left:1268.7px;top:782.5px;font-size:14px;color:#e8e8e8;transform:scaleX(0.9493);transform-origin:0 0;">Rows: 59</div>
</div>
</body></html>
